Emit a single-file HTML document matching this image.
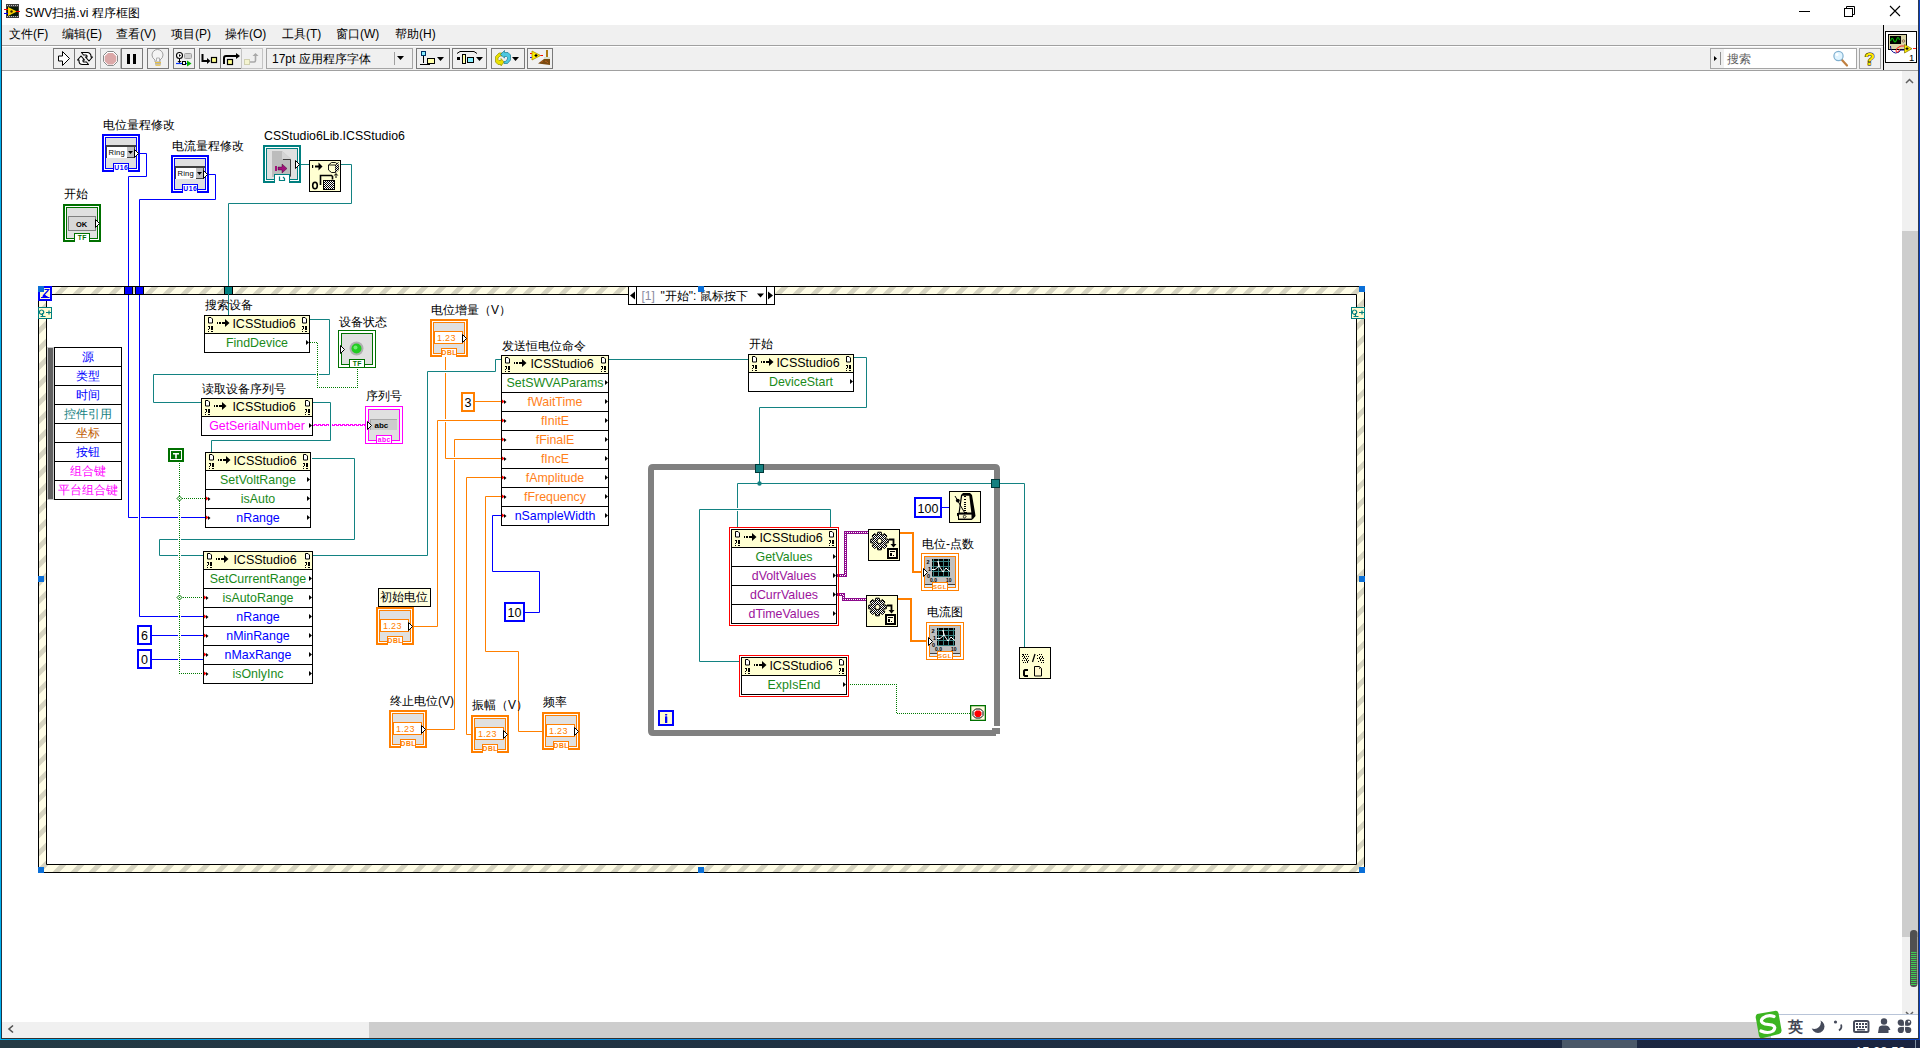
<!DOCTYPE html>
<html><head><meta charset="utf-8"><style>
html,body{margin:0;padding:0;width:1920px;height:1048px;overflow:hidden;background:#fff}
body{font-family:"Liberation Sans", sans-serif;position:relative}
.a{position:absolute}
svg text{font-family:"Liberation Sans", sans-serif}
</style></head><body>
<svg class="a" style="left:0;top:0" width="1920" height="1048" viewBox="0 0 1920 1048" shape-rendering="auto">
<rect x="0" y="0" width="1920" height="1048" fill="#ffffff" />
<rect x="0" y="0" width="1920" height="25" fill="#ffffff" />
<text x="25" y="17" fill="#000" font-size="12" text-anchor="start" >SWV扫描.vi 程序框图</text>
<rect x="6" y="4" width="13" height="14" fill="#3c3c3c" />
<rect x="7" y="5" width="1" height="1" fill="#c0c0c0" />
<rect x="7" y="16" width="1" height="1" fill="#c0c0c0" />
<rect x="9" y="5" width="1" height="1" fill="#c0c0c0" />
<rect x="9" y="16" width="1" height="1" fill="#c0c0c0" />
<rect x="11" y="5" width="1" height="1" fill="#c0c0c0" />
<rect x="11" y="16" width="1" height="1" fill="#c0c0c0" />
<rect x="13" y="5" width="1" height="1" fill="#c0c0c0" />
<rect x="13" y="16" width="1" height="1" fill="#c0c0c0" />
<rect x="15" y="5" width="1" height="1" fill="#c0c0c0" />
<rect x="15" y="16" width="1" height="1" fill="#c0c0c0" />
<rect x="17" y="5" width="1" height="1" fill="#c0c0c0" />
<rect x="17" y="16" width="1" height="1" fill="#c0c0c0" />
<rect x="7" y="7" width="11" height="9" fill="#0a1a0a" />
<path d="M8,7 l9,4.5 l-9,4.5 z" fill="#f8d000"/><circle cx="11.5" cy="11.5" r="1.2" fill="#302000"/>
<rect x="4" y="9" width="4" height="1" fill="#ff0000" />
<rect x="4" y="13" width="4" height="1" fill="#0000ff" />
<rect x="16" y="11" width="4" height="1" fill="#ff0000" />
<line x1="1799" y1="11.5" x2="1810" y2="11.5" stroke="#000"/>
<rect x="1844.5" y="8.5" width="8" height="8" fill="#fff" stroke="#000"/><path d="M1846.5,8.5 v-2 h8 v8 h-2" fill="none" stroke="#000"/>
<path d="M1890,6 L1900,16 M1900,6 L1890,16" stroke="#000" stroke-width="1.1"/>
<rect x="0" y="25" width="1920" height="20" fill="#f0f0f0" />
<text x="9" y="37.5" fill="#000" font-size="12" text-anchor="start" >文件(F)</text>
<text x="62" y="37.5" fill="#000" font-size="12" text-anchor="start" >编辑(E)</text>
<text x="116" y="37.5" fill="#000" font-size="12" text-anchor="start" >查看(V)</text>
<text x="171" y="37.5" fill="#000" font-size="12" text-anchor="start" >项目(P)</text>
<text x="225" y="37.5" fill="#000" font-size="12" text-anchor="start" >操作(O)</text>
<text x="282" y="37.5" fill="#000" font-size="12" text-anchor="start" >工具(T)</text>
<text x="336" y="37.5" fill="#000" font-size="12" text-anchor="start" >窗口(W)</text>
<text x="395" y="37.5" fill="#000" font-size="12" text-anchor="start" >帮助(H)</text>
<rect x="2" y="45" width="1881" height="1" fill="#a0a0a0" />
<rect x="2" y="46" width="1881" height="1" fill="#ffffff" />
<rect x="0" y="47" width="1920" height="23" fill="#f0f0f0" />
<rect x="0" y="70" width="1920" height="1" fill="#a0a0a0" />
<rect x="53.5" y="48.5" width="21" height="20" fill="#f0f0f0" stroke="#7a7a7a"/>
<rect x="74.5" y="48.5" width="21" height="20" fill="#f0f0f0" stroke="#7a7a7a"/>
<rect x="100.5" y="48.5" width="21" height="20" fill="#f0f0f0" stroke="#7a7a7a"/>
<rect x="121.5" y="48.5" width="21" height="20" fill="#f0f0f0" stroke="#7a7a7a"/>
<rect x="147.5" y="48.5" width="21" height="20" fill="#f0f0f0" stroke="#7a7a7a"/>
<rect x="173.5" y="48.5" width="21" height="20" fill="#f0f0f0" stroke="#7a7a7a"/>
<rect x="199.5" y="48.5" width="21" height="20" fill="#f0f0f0" stroke="#7a7a7a"/>
<rect x="220.5" y="48.5" width="21" height="20" fill="#f0f0f0" stroke="#7a7a7a"/>
<rect x="241.5" y="48.5" width="21" height="20" fill="#f0f0f0" stroke="#7a7a7a"/>
<path d="M58.5,56 h4 v-4.5 l7,7 l-7,7 v-4.5 h-4 z" fill="#fff" stroke="#000" stroke-width="1"/>
<path d="M81.5,52.5 h6 a3.5,3.5 0 0,1 3.5,3.5 v1 h1.5 l-3.5,4 l-3.5,-4 h1.5 v-1 a1,1 0 0,0 -1,-1 h-2.5 z" fill="#fff" stroke="#000" stroke-width="1.1" stroke-linejoin="round"/>
<path d="M88.5,64.5 h-6 a3.5,3.5 0 0,1 -3.5,-3.5 v-1 h-1.5 l3.5,-4 l3.5,4 h-1.5 v1 a1,1 0 0,0 1,1 h2.5 z" fill="#fff" stroke="#000" stroke-width="1.1" stroke-linejoin="round"/>
<rect x="100.5" y="48.5" width="20" height="20" fill="#f0f0f0" stroke="#b8b8b8"/>
<path d="M107.5,51.5 h6 l4,4 v6 l-4,4 h-6 l-4,-4 v-6z" fill="#fff" stroke="#8a8a8a" stroke-width="1"/>
<path d="M108,53 h5 l3.3,3.3 v5 l-3.3,3.3 h-5 l-3.3,-3.3 v-5z" fill="#dba8a8"/>
<rect x="127" y="54" width="3" height="10" fill="#000" />
<rect x="133" y="54" width="3" height="10" fill="#000" />
<path d="M155,62 v-2 q-3,-2 -3,-5 a5.5,5.5 0 0,1 11,0 q0,3 -3,5 v2z" fill="#f4f4f4" stroke="#a0a0a0" stroke-width="1"/>
<path d="M156.5,61 v-3 h3 v3" fill="none" stroke="#b0b0b0"/>
<rect x="155" y="62" width="6" height="1.2" fill="#e8c040" />
<rect x="155" y="63.3" width="6" height="1.2" fill="#a0a0a0" />
<rect x="155.5" y="64.6" width="5" height="1.2" fill="#e8c040" />
<circle cx="179.5" cy="55.5" r="3" fill="#fff" stroke="#000" stroke-width="1.1"/><path d="M179,54 l2,1.5 l-2,1.5z" fill="#000"/>
<path d="M179.5,58.5 v4" stroke="#000"/><path d="M177.5,61 h4 l-2,2z" fill="#000"/>
<rect x="184.5" y="53.5" width="7" height="5" rx="1" fill="#d0d0d0" stroke="#a0a0a0"/>
<line x1="176" y1="63.5" x2="187" y2="63.5" stroke="#0030ff" stroke-width="1.2"/><rect x="182.5" y="61.5" width="3" height="3" fill="#fff" stroke="#000"/><path d="M187,60.5 l4.5,3 l-4.5,3z" fill="#00b000"/>
<path d="M202.5,54 v7 h5" fill="none" stroke="#000" stroke-width="2"/><path d="M207,58 l3.5,3 l-3.5,3z" fill="#000"/><rect x="211.5" y="57.5" width="5" height="5" fill="#ffff90" stroke="#000" stroke-width="1.2"/>
<path d="M224,64 v-6 q0,-2 2,-2 h10" fill="none" stroke="#000" stroke-width="2"/><path d="M236,53 l4,3 l-4,3z" fill="#000"/><rect x="227.5" y="59.5" width="5" height="5" fill="#ffff90" stroke="#000" stroke-width="1.2"/>
<rect x="241.5" y="48.5" width="21" height="20" fill="#f0f0f0" stroke="#c4c4c4"/>
<rect x="244.5" y="59.5" width="5" height="5" fill="#f4f4d0" stroke="#d0d0b0"/><path d="M250,62 h4 q1.5,0 1.5,-1.5 v-5" fill="none" stroke="#a8a8a8" stroke-width="1.6"/><path d="M252.5,56 l3,-3 l3,3z" fill="#a8a8a8"/>
<rect x="266.5" y="48.5" width="146" height="20" fill="#f0f0f0" stroke="#a5a5a5"/>
<text x="272" y="63" fill="#000" font-size="12" text-anchor="start" >17pt 应用程序字体</text>
<line x1="394.5" y1="52" x2="394.5" y2="65" stroke="#a0a0a0"/><path d="M397,56 h7 l-3.5,4z" fill="#000"/>
<rect x="416.5" y="48.5" width="33" height="20" fill="#f0f0f0" stroke="#7a7a7a"/>
<rect x="452.5" y="48.5" width="34" height="20" fill="#f0f0f0" stroke="#7a7a7a"/>
<rect x="491.5" y="48.5" width="33" height="20" fill="#f0f0f0" stroke="#7a7a7a"/>
<rect x="527.5" y="48.5" width="25" height="20" fill="#f0f0f0" stroke="#7a7a7a"/>
<rect x="421.5" y="51.5" width="4" height="4" fill="#8ef" stroke="#036"/><path d="M423.5,56 v7 M420,64.5 h10" stroke="#000"/><rect x="427.5" y="58.5" width="7" height="5" fill="#ffa" stroke="#000"/><path d="M437,57 h7 l-3.5,4z" fill="#000"/>
<path d="M457,53.5 l3,-2 h14 l3,2" fill="none" stroke="#000"/><rect x="457" y="57" width="3" height="3" fill="#000"/><rect x="462.5" y="54.5" width="3" height="9" fill="#ffa" stroke="#000"/><rect x="467.5" y="57.5" width="6" height="5" fill="#8ef" stroke="#000"/><path d="M476,57 h7 l-3.5,4z" fill="#000"/>
<path d="M502,53 L499,53 L495.5,56.5 L495.5,62 L498,64.5 L501,64.5 L501,66 L504,62 L501,58.5 L501,60.5 L499,60.5 L498,59.5 L498,58 L500,56 L502,56 Z" fill="#e8e000" stroke="#9a9400" stroke-width="0.7"/>
<path d="M504.5,50.5 L500.5,54.5 L504.5,58 L504.5,56.5 L506.5,56.5 L507.5,57.5 L507.5,59 L505.5,61.5 L504,61.5 L504,63.5 L507.5,63.5 L510.5,60 L510.5,55 L508,52.5 L504.5,52.5 Z" fill="#4ec8e0" stroke="#1a7a90" stroke-width="0.7"/>
<path d="M512,57 h7 l-3.5,4z" fill="#000"/>
<line x1="530" y1="53.5" x2="532" y2="53.5" stroke="#f00"/><line x1="530" y1="57.5" x2="532" y2="57.5" stroke="#00f"/><line x1="540" y1="55.5" x2="543" y2="55.5" stroke="#f00"/>
<path d="M532,51 L540.5,55.5 L532,60 Z" fill="#ffee00" stroke="#b08a00" stroke-width="0.8"/><path d="M534.5,55.5 h3 M536,54 v3" stroke="#000" stroke-width="1.2"/>
<rect x="546" y="50" width="2" height="7" fill="#b07a10"/><rect x="544" y="57" width="6" height="2" fill="#d8e0d0"/>
<path d="M544,59 L550,59 L550,65 L538,63.5 Z" fill="#7a4a10"/><path d="M541,62 l2,-1 M545,61 l2,1 M547,63 l1,-1" stroke="#c06020" stroke-width="0.8"/>
<rect x="1710.5" y="48.5" width="146" height="20" fill="#fff" stroke="#a5a5a5"/><rect x="1711" y="49" width="13" height="19" fill="#f0f0f0"/><path d="M1714,56 l3,2.5 l-3,2.5z" fill="#000"/>
<text x="1727" y="63" fill="#606060" font-size="12" text-anchor="start" >搜索</text>
<line x1="1842" y1="60" x2="1847" y2="65.5" stroke="#c08040" stroke-width="2.2" stroke-linecap="round"/><circle cx="1838.5" cy="56" r="4.6" fill="#e0f4ff" stroke="#80b0d0" stroke-width="1.2"/><circle cx="1837" cy="54.5" r="1.5" fill="#fff"/>
<line x1="1720.5" y1="52" x2="1720.5" y2="65" stroke="#909090"/>
<rect x="1859.5" y="48.5" width="21" height="20" fill="#f0f0f0" stroke="#a5a5a5"/>
<text x="1864.5" y="65" fill="#ffe800" font-size="17" text-anchor="start" font-weight="bold" stroke="#000" stroke-width="0.9" paint-order="stroke">?</text>
<line x1="1883.5" y1="25" x2="1883.5" y2="70" stroke="#000"/>
<rect x="1885.5" y="31.5" width="31" height="31" fill="#fff" stroke="#000"/>
<rect x="1888" y="34" width="19" height="16" fill="#000" />
<rect x="1889" y="35" width="17" height="14" fill="#d8d4a8" />
<rect x="1890" y="36" width="11" height="8" fill="#000" />
<path d="M1890.5,41 q1.5,-5 3,-1 q1.5,4 3,0 q1.5,-5 3,0" fill="none" stroke="#00c000" stroke-width="1.1"/>
<circle cx="1903.5" cy="41" r="1.3" fill="#f0c090" stroke="#333" stroke-width="0.5"/>
<path d="M1890.5,46 q0,6 5,7 q4,0 5,-3 h4" fill="none" stroke="#0a0a90" stroke-width="1"/>
<path d="M1904,46 h-3 l-2,1 q-3,1 -3,4 q0,2 2,1 l2,-3" fill="none" stroke="#ff2020" stroke-width="1"/>
<path d="M1904.5,44.5 L1912,48.7 L1904.5,53 Z" fill="#ffee00" stroke="#807000" stroke-width="0.7"/><path d="M1905.5,48.7 h3 M1907,47.2 v3" stroke="#000" stroke-width="1"/>
<rect x="1913" y="48" width="3" height="1" fill="#ff2020" />
<text x="1909" y="60.5" fill="#000" font-size="9.5" text-anchor="start" >1</text>
<rect x="1902" y="71" width="16" height="951" fill="#f0f0f0" />
<rect x="1902" y="231" width="16" height="706" fill="#cdcdcd" />
<path d="M1906,83 l3.5,-3.5 l3.5,3.5" fill="none" stroke="#606060" stroke-width="1.5"/>
<path d="M1906,1012 l3.5,3.5 l3.5,-3.5" fill="none" stroke="#606060" stroke-width="1.5"/>
<rect x="1910" y="930" width="7.5" height="57" rx="3.5" fill="#505050"/>
<line x1="1911" y1="952.5" x2="1916.5" y2="952.5" stroke="#3ccf50"/>
<line x1="1911" y1="954.5" x2="1916.5" y2="954.5" stroke="#3ccf50"/>
<line x1="1911" y1="956.5" x2="1916.5" y2="956.5" stroke="#3ccf50"/>
<line x1="1911" y1="958.5" x2="1916.5" y2="958.5" stroke="#3ccf50"/>
<line x1="1911" y1="960.5" x2="1916.5" y2="960.5" stroke="#3ccf50"/>
<line x1="1911" y1="962.5" x2="1916.5" y2="962.5" stroke="#3ccf50"/>
<line x1="1911" y1="964.5" x2="1916.5" y2="964.5" stroke="#3ccf50"/>
<line x1="1911" y1="966.5" x2="1916.5" y2="966.5" stroke="#3ccf50"/>
<line x1="1911" y1="968.5" x2="1916.5" y2="968.5" stroke="#3ccf50"/>
<line x1="1911" y1="970.5" x2="1916.5" y2="970.5" stroke="#3ccf50"/>
<line x1="1911" y1="972.5" x2="1916.5" y2="972.5" stroke="#3ccf50"/>
<line x1="1911" y1="974.5" x2="1916.5" y2="974.5" stroke="#3ccf50"/>
<line x1="1911" y1="976.5" x2="1916.5" y2="976.5" stroke="#3ccf50"/>
<line x1="1911" y1="978.5" x2="1916.5" y2="978.5" stroke="#3ccf50"/>
<line x1="1911" y1="980.5" x2="1916.5" y2="980.5" stroke="#3ccf50"/>
<line x1="1911" y1="982.5" x2="1916.5" y2="982.5" stroke="#3ccf50"/>
<line x1="1911" y1="984.5" x2="1916.5" y2="984.5" stroke="#3ccf50"/>
<rect x="2" y="1022" width="1900" height="16" fill="#f0f0f0" />
<rect x="369" y="1022" width="1533" height="16" fill="#cdcdcd" />
<path d="M13,1025.5 l-4,3.5 l4,3.5" fill="none" stroke="#505050" stroke-width="1.6"/>
<rect x="1770.5" y="1014.5" width="148" height="24" fill="#fff" stroke="#b8c4d8"/>
<path d="M1757,1014 Q1755,1016 1756,1019 L1759,1036 Q1760,1039 1763,1038 L1779,1034 Q1782,1033 1781.5,1030 L1778.5,1013 Q1777.5,1010 1774.5,1011 Z" fill="#3cb521"/>
<path d="M1774,1016.5 Q1768,1014 1763,1018 Q1759,1022 1765,1024 L1772,1025 Q1777,1027 1773,1031 Q1768,1034 1761,1031" fill="none" stroke="#fff" stroke-width="3.2" stroke-linecap="round"/>
<text x="1787.5" y="1031.5" fill="#404552" font-size="14.5" text-anchor="start" font-weight="bold">英</text>
<circle cx="1818" cy="1026.5" r="6.5" fill="#454a5a"/><circle cx="1814.3" cy="1022.3" r="6.6" fill="#fff"/>
<circle cx="1835.5" cy="1022" r="1.6" fill="#454a5a"/><path d="M1841,1024.5 q1.5,3.5 -2,6" fill="none" stroke="#454a5a" stroke-width="1.8"/>
<rect x="1854" y="1021" width="14.5" height="11" rx="1.5" fill="#fff" stroke="#454a5a" stroke-width="2"/>
<rect x="1856" y="1023" width="2" height="2" fill="#454a5a"/>
<rect x="1859" y="1023" width="2" height="2" fill="#454a5a"/>
<rect x="1862" y="1023" width="2" height="2" fill="#454a5a"/>
<rect x="1865" y="1023" width="2" height="2" fill="#454a5a"/>
<rect x="1856" y="1026" width="2" height="2" fill="#454a5a"/>
<rect x="1859" y="1026" width="2" height="2" fill="#454a5a"/>
<rect x="1862" y="1026" width="2" height="2" fill="#454a5a"/>
<rect x="1865" y="1026" width="2" height="2" fill="#454a5a"/>
<rect x="1857" y="1029" width="8" height="1.5" fill="#454a5a"/>
<circle cx="1884" cy="1021.5" r="3.2" fill="#454a5a"/><path d="M1878,1033 L1879,1027 Q1880,1025.5 1882,1025.5 H1886 Q1888,1025.5 1889,1027 L1890.5,1030 L1888.5,1030 L1888.5,1033Z" fill="#454a5a"/>
<circle cx="1900.8" cy="1022.6" r="3.1" fill="#454a5a"/><rect x="1900.8" y="1022.6" width="3.1" height="3.1" fill="#454a5a"/><circle cx="1900.8" cy="1030.0" r="3.1" fill="#454a5a"/><rect x="1900.8" y="1026.9" width="3.1" height="3.1" fill="#454a5a"/><circle cx="1908.2" cy="1022.6" r="3.1" fill="#454a5a"/><rect x="1905.1" y="1022.6" width="3.1" height="3.1" fill="#454a5a"/><circle cx="1908.2" cy="1030.0" r="3.1" fill="#454a5a"/><rect x="1905.1" y="1026.9" width="3.1" height="3.1" fill="#454a5a"/><circle cx="1909.0" cy="1021.8" r="1" fill="#fff"/>
<defs><linearGradient id="bord" x1="0" x2="1" y1="0" y2="0"><stop offset="0" stop-color="#00b0f0"/><stop offset="0.6" stop-color="#0a70d8"/><stop offset="1" stop-color="#0a40c0"/></linearGradient><linearGradient id="task" x1="0" x2="1" y1="0" y2="0"><stop offset="0" stop-color="#243a44"/><stop offset="1" stop-color="#1a2440"/></linearGradient></defs>
<rect x="0" y="0" width="1" height="1040" fill="#00b0f0" />
<rect x="1" y="0" width="1" height="1039" fill="#203444" />
<rect x="1918" y="0" width="1" height="1039" fill="#303a50" />
<rect x="1919" y="0" width="1" height="1040" fill="#0a40c0" />
<rect x="1" y="1038" width="1918" height="1" fill="#303030" />
<rect x="0" y="1039" width="1920" height="1" fill="url(#bord)" />
<rect x="0" y="1040" width="1920" height="8" fill="url(#task)" />
<rect x="1562" y="1040" width="75" height="8" fill="#4a5868" />
<rect x="1915" y="1040" width="1" height="8" fill="#8090a0" />
<text x="1855" y="1056" fill="#fff" font-size="13" text-anchor="start" >15:28:59</text>
<defs>
<pattern id="stripes" patternUnits="userSpaceOnUse" width="18" height="18" patternTransform="skewX(-45)">
<rect x="-1" y="-1" width="20" height="20" fill="#fffde6" shape-rendering="crispEdges"/><rect x="6.5" y="-1" width="6.9" height="20" fill="#d6d4c0" shape-rendering="crispEdges"/>
</pattern>
<pattern id="checker" patternUnits="userSpaceOnUse" width="2" height="2"><rect width="2" height="2" fill="#fff"/><rect width="1" height="1" fill="#000"/><rect x="1" y="1" width="1" height="1" fill="#000"/></pattern>
<pattern id="wavy" patternUnits="userSpaceOnUse" width="4" height="4"><path d="M0,2 l1,-1 l2,2 l1,-1" fill="none" stroke="#ff00ff" stroke-width="1"/></pattern>
</defs>
<text x="103" y="128.5" fill="#000" font-size="12" text-anchor="start" >电位量程修改</text>
<text x="172" y="149.5" fill="#000" font-size="12" text-anchor="start" >电流量程修改</text>
<text x="264" y="140" fill="#000" font-size="12.3" text-anchor="start" >CSStudio6Lib.ICSStudio6</text>
<text x="64" y="198" fill="#000" font-size="12" text-anchor="start" >开始</text>
<rect x="102" y="134" width="38" height="38" fill="#0000ff" />
<rect x="104" y="136" width="34" height="34" fill="#fff" />
<rect x="105" y="137" width="32" height="32" fill="#0000ff" />
<rect x="106" y="138" width="30" height="30" fill="#e0e0e0" />
<rect x="113" y="163" width="16" height="9" fill="#0000ff" />
<rect x="114" y="164" width="14" height="8" fill="#fff" />
<text x="121.3" y="170.3" fill="#0000ff" font-size="6.8" text-anchor="middle" font-weight="bold" letter-spacing="0.5">U16</text>
<rect x="106" y="145" width="30" height="2" fill="#404040" />
<rect x="106" y="147" width="1" height="11" fill="#404040" />
<rect x="107" y="147" width="20" height="11" fill="#fff" />
<rect x="127" y="147" width="7" height="10" fill="#c0c0c0" />
<rect x="127" y="157" width="8" height="1" fill="#404040" />
<rect x="134" y="146" width="1" height="12" fill="#404040" />
<text x="108.5" y="155" fill="#000" font-size="7.6" text-anchor="start" letter-spacing="0.2">Ring</text>
<path d="M128,151 h5 l-2.5,3 z" fill="#000"/>
<path d="M134.5,149.5 l4,4 l-4,4 z" fill="#fff" stroke="#000" stroke-width="1"/>
<rect x="171" y="155" width="38" height="38" fill="#0000ff" />
<rect x="173" y="157" width="34" height="34" fill="#fff" />
<rect x="174" y="158" width="32" height="32" fill="#0000ff" />
<rect x="175" y="159" width="30" height="30" fill="#e0e0e0" />
<rect x="182" y="184" width="16" height="9" fill="#0000ff" />
<rect x="183" y="185" width="14" height="8" fill="#fff" />
<text x="190.3" y="191.3" fill="#0000ff" font-size="6.8" text-anchor="middle" font-weight="bold" letter-spacing="0.5">U16</text>
<rect x="175" y="166" width="30" height="2" fill="#404040" />
<rect x="175" y="168" width="1" height="11" fill="#404040" />
<rect x="176" y="168" width="20" height="11" fill="#fff" />
<rect x="196" y="168" width="7" height="10" fill="#c0c0c0" />
<rect x="196" y="178" width="8" height="1" fill="#404040" />
<rect x="203" y="167" width="1" height="12" fill="#404040" />
<text x="177.5" y="176" fill="#000" font-size="7.6" text-anchor="start" letter-spacing="0.2">Ring</text>
<path d="M197,172 h5 l-2.5,3 z" fill="#000"/>
<path d="M203.5,170.5 l4,4 l-4,4 z" fill="#fff" stroke="#000" stroke-width="1"/>
<rect x="63" y="204" width="38" height="38" fill="#007000" />
<rect x="65" y="206" width="34" height="34" fill="#fff" />
<rect x="66" y="207" width="32" height="32" fill="#007000" />
<rect x="67" y="208" width="30" height="30" fill="#e0e0e0" />
<rect x="74" y="233" width="16" height="9" fill="#007000" />
<rect x="75" y="234" width="14" height="8" fill="#fff" />
<text x="82.3" y="240.3" fill="#007000" font-size="6.8" text-anchor="middle" font-weight="bold" letter-spacing="0.5">TF</text>
<rect x="68" y="216" width="28" height="15" fill="#808080" />
<rect x="69" y="217" width="26" height="13" fill="#d8d8d8" />
<text x="81.5" y="227" fill="#000" font-size="7.5" text-anchor="middle" font-weight="bold">OK</text>
<path d="M95.5,219.5 l4,4 l-4,4 z" fill="#fff" stroke="#000" stroke-width="1"/>
<rect x="263" y="145" width="38" height="38" fill="#007f7f" />
<rect x="265" y="147" width="34" height="34" fill="#fff" />
<rect x="266" y="148" width="32" height="32" fill="#007f7f" />
<rect x="267" y="149" width="30" height="30" fill="#e0e0e0" />
<path d="M272,151 h10 l9,8 v18 h-19z" fill="#bcbcbc"/>
<path d="M282,151 v8 h9z" fill="#d4d4d4"/>
<path d="M283,159.5 h7.5 v17" fill="none" stroke="#404040" stroke-width="1"/>
<rect x="275" y="166" width="2" height="5" fill="#a0107a"/><path d="M278,167 h4 v-3 l5,4.5 l-5,4.5 v-3 h-4z" fill="#a0107a" stroke="#300020" stroke-width="0.4"/>
<rect x="274" y="174" width="16" height="9" fill="#007f7f" />
<rect x="275" y="175" width="14" height="8" fill="#fff" />
<path d="M279.5,176.5 v4 h5 v-2 l-1.5,-1.5" fill="none" stroke="#007f7f" stroke-width="1.2"/>
<path d="M295.5,160.5 l4,4 l-4,4 z" fill="#fff" stroke="#000" stroke-width="1"/>
<rect x="309.5" y="160.5" width="31" height="31" fill="#ffffd2" stroke="#000"/>
<rect x="312" y="165" width="1.2" height="3" fill="#000"/><path d="M315,165.5 h3.5 v-3 l4,4 l-4,4 v-3 h-3.5z" fill="#000"/>
<path d="M328.5,165 l3,-2.5 h4 l3,2.5 v5 l-3,2.5 h-4 l-3,-2.5z M328.5,165 h7 l3,-2.5 M335.5,165 v7.5" fill="none" stroke="#000" stroke-width="0.9"/>
<path d="M335.5,165.5 l3,-2.5 v7 l-3,2.5z" fill="url(#checker)"/>
<path d="M336,178 v-4 M334.3,175.5 l1.7,-2 l1.7,2" fill="none" stroke="#000" stroke-width="1"/>
<path d="M320.5,185 v-9.5 h11 l1,1 v3" fill="none" stroke="#000" stroke-width="1.6"/>
<rect x="323" y="180" width="12" height="10" fill="#000" />
<rect x="324" y="181" width="10" height="8" fill="url(#checker)"/>
<ellipse cx="315" cy="185.5" rx="2.3" ry="3.3" fill="none" stroke="#000" stroke-width="1.6"/>
<polyline points="140,153.5 146.5,153.5 146.5,176.5 128.5,176.5 128.5,517.5 205,517.5" fill="none" stroke="#0000ff" stroke-width="1" />
<polyline points="209,174.5 215.5,174.5 215.5,199.5 139.5,199.5 139.5,616.5 203,616.5" fill="none" stroke="#0000ff" stroke-width="1" />
<polyline points="301,164.5 309,164.5" fill="none" stroke="#138282" stroke-width="1" />
<polyline points="341,164.5 351.5,164.5 351.5,203.5 228.5,203.5 228.5,320" fill="none" stroke="#138282" stroke-width="1" />
<clipPath id="bandclip"><path d="M38,286 H1365 V873 H38 Z M46,294 V864 H1356 V294 Z" clip-rule="evenodd"/></clipPath>
<path d="M38,286 H1365 V873 H38 Z M46,294 V864 H1356 V294 Z" fill="#fffde6" fill-rule="evenodd"/>
<g clip-path="url(#bandclip)"><path d="M-9.5,286 L-2.6000000000000227,286 L-589.6,873 L-596.5,873Z M8.5,286 L15.399999999999977,286 L-571.6,873 L-578.5,873Z M26.5,286 L33.39999999999998,286 L-553.6,873 L-560.5,873Z M44.5,286 L51.39999999999998,286 L-535.6,873 L-542.5,873Z M62.5,286 L69.39999999999998,286 L-517.6,873 L-524.5,873Z M80.5,286 L87.39999999999998,286 L-499.6,873 L-506.5,873Z M98.5,286 L105.39999999999998,286 L-481.6,873 L-488.5,873Z M116.5,286 L123.39999999999998,286 L-463.6,873 L-470.5,873Z M134.5,286 L141.39999999999998,286 L-445.6,873 L-452.5,873Z M152.5,286 L159.39999999999998,286 L-427.6,873 L-434.5,873Z M170.5,286 L177.39999999999998,286 L-409.6,873 L-416.5,873Z M188.5,286 L195.39999999999998,286 L-391.6,873 L-398.5,873Z M206.5,286 L213.39999999999998,286 L-373.6,873 L-380.5,873Z M224.5,286 L231.39999999999998,286 L-355.6,873 L-362.5,873Z M242.5,286 L249.39999999999998,286 L-337.6,873 L-344.5,873Z M260.5,286 L267.4,286 L-319.6,873 L-326.5,873Z M278.5,286 L285.4,286 L-301.6,873 L-308.5,873Z M296.5,286 L303.4,286 L-283.6,873 L-290.5,873Z M314.5,286 L321.4,286 L-265.6,873 L-272.5,873Z M332.5,286 L339.4,286 L-247.60000000000002,873 L-254.5,873Z M350.5,286 L357.4,286 L-229.60000000000002,873 L-236.5,873Z M368.5,286 L375.4,286 L-211.60000000000002,873 L-218.5,873Z M386.5,286 L393.4,286 L-193.60000000000002,873 L-200.5,873Z M404.5,286 L411.4,286 L-175.60000000000002,873 L-182.5,873Z M422.5,286 L429.4,286 L-157.60000000000002,873 L-164.5,873Z M440.5,286 L447.4,286 L-139.60000000000002,873 L-146.5,873Z M458.5,286 L465.4,286 L-121.60000000000002,873 L-128.5,873Z M476.5,286 L483.4,286 L-103.60000000000002,873 L-110.5,873Z M494.5,286 L501.4,286 L-85.60000000000002,873 L-92.5,873Z M512.5,286 L519.4,286 L-67.60000000000002,873 L-74.5,873Z M530.5,286 L537.4,286 L-49.60000000000002,873 L-56.5,873Z M548.5,286 L555.4,286 L-31.600000000000023,873 L-38.5,873Z M566.5,286 L573.4,286 L-13.600000000000023,873 L-20.5,873Z M584.5,286 L591.4,286 L4.399999999999977,873 L-2.5,873Z M602.5,286 L609.4,286 L22.399999999999977,873 L15.5,873Z M620.5,286 L627.4,286 L40.39999999999998,873 L33.5,873Z M638.5,286 L645.4,286 L58.39999999999998,873 L51.5,873Z M656.5,286 L663.4,286 L76.39999999999998,873 L69.5,873Z M674.5,286 L681.4,286 L94.39999999999998,873 L87.5,873Z M692.5,286 L699.4,286 L112.39999999999998,873 L105.5,873Z M710.5,286 L717.4,286 L130.39999999999998,873 L123.5,873Z M728.5,286 L735.4,286 L148.39999999999998,873 L141.5,873Z M746.5,286 L753.4000000000001,286 L166.4000000000001,873 L159.5,873Z M764.5,286 L771.4000000000001,286 L184.4000000000001,873 L177.5,873Z M782.5,286 L789.4000000000001,286 L202.4000000000001,873 L195.5,873Z M800.5,286 L807.4000000000001,286 L220.4000000000001,873 L213.5,873Z M818.5,286 L825.4000000000001,286 L238.4000000000001,873 L231.5,873Z M836.5,286 L843.4000000000001,286 L256.4000000000001,873 L249.5,873Z M854.5,286 L861.4000000000001,286 L274.4000000000001,873 L267.5,873Z M872.5,286 L879.4000000000001,286 L292.4000000000001,873 L285.5,873Z M890.5,286 L897.4000000000001,286 L310.4000000000001,873 L303.5,873Z M908.5,286 L915.4000000000001,286 L328.4000000000001,873 L321.5,873Z M926.5,286 L933.4000000000001,286 L346.4000000000001,873 L339.5,873Z M944.5,286 L951.4000000000001,286 L364.4000000000001,873 L357.5,873Z M962.5,286 L969.4000000000001,286 L382.4000000000001,873 L375.5,873Z M980.5,286 L987.4000000000001,286 L400.4000000000001,873 L393.5,873Z M998.5,286 L1005.4000000000001,286 L418.4000000000001,873 L411.5,873Z M1016.5,286 L1023.4000000000001,286 L436.4000000000001,873 L429.5,873Z M1034.5,286 L1041.4,286 L454.4000000000001,873 L447.5,873Z M1052.5,286 L1059.4,286 L472.4000000000001,873 L465.5,873Z M1070.5,286 L1077.4,286 L490.4000000000001,873 L483.5,873Z M1088.5,286 L1095.4,286 L508.4000000000001,873 L501.5,873Z M1106.5,286 L1113.4,286 L526.4000000000001,873 L519.5,873Z M1124.5,286 L1131.4,286 L544.4000000000001,873 L537.5,873Z M1142.5,286 L1149.4,286 L562.4000000000001,873 L555.5,873Z M1160.5,286 L1167.4,286 L580.4000000000001,873 L573.5,873Z M1178.5,286 L1185.4,286 L598.4000000000001,873 L591.5,873Z M1196.5,286 L1203.4,286 L616.4000000000001,873 L609.5,873Z M1214.5,286 L1221.4,286 L634.4000000000001,873 L627.5,873Z M1232.5,286 L1239.4,286 L652.4000000000001,873 L645.5,873Z M1250.5,286 L1257.4,286 L670.4000000000001,873 L663.5,873Z M1268.5,286 L1275.4,286 L688.4000000000001,873 L681.5,873Z M1286.5,286 L1293.4,286 L706.4000000000001,873 L699.5,873Z M1304.5,286 L1311.4,286 L724.4000000000001,873 L717.5,873Z M1322.5,286 L1329.4,286 L742.4000000000001,873 L735.5,873Z M1340.5,286 L1347.4,286 L760.4000000000001,873 L753.5,873Z M1358.5,286 L1365.4,286 L778.4000000000001,873 L771.5,873Z M1376.5,286 L1383.4,286 L796.4000000000001,873 L789.5,873Z M1394.5,286 L1401.4,286 L814.4000000000001,873 L807.5,873Z M1412.5,286 L1419.4,286 L832.4000000000001,873 L825.5,873Z M1430.5,286 L1437.4,286 L850.4000000000001,873 L843.5,873Z M1448.5,286 L1455.4,286 L868.4000000000001,873 L861.5,873Z M1466.5,286 L1473.4,286 L886.4000000000001,873 L879.5,873Z M1484.5,286 L1491.4,286 L904.4000000000001,873 L897.5,873Z M1502.5,286 L1509.4,286 L922.4000000000001,873 L915.5,873Z M1520.5,286 L1527.4,286 L940.4000000000001,873 L933.5,873Z M1538.5,286 L1545.4,286 L958.4000000000001,873 L951.5,873Z M1556.5,286 L1563.4,286 L976.4000000000001,873 L969.5,873Z M1574.5,286 L1581.4,286 L994.4000000000001,873 L987.5,873Z M1592.5,286 L1599.4,286 L1012.4000000000001,873 L1005.5,873Z M1610.5,286 L1617.4,286 L1030.4,873 L1023.5,873Z M1628.5,286 L1635.4,286 L1048.4,873 L1041.5,873Z M1646.5,286 L1653.4,286 L1066.4,873 L1059.5,873Z M1664.5,286 L1671.4,286 L1084.4,873 L1077.5,873Z M1682.5,286 L1689.4,286 L1102.4,873 L1095.5,873Z M1700.5,286 L1707.4,286 L1120.4,873 L1113.5,873Z M1718.5,286 L1725.4,286 L1138.4,873 L1131.5,873Z M1736.5,286 L1743.4,286 L1156.4,873 L1149.5,873Z M1754.5,286 L1761.4,286 L1174.4,873 L1167.5,873Z M1772.5,286 L1779.4,286 L1192.4,873 L1185.5,873Z M1790.5,286 L1797.4,286 L1210.4,873 L1203.5,873Z M1808.5,286 L1815.4,286 L1228.4,873 L1221.5,873Z M1826.5,286 L1833.4,286 L1246.4,873 L1239.5,873Z M1844.5,286 L1851.4,286 L1264.4,873 L1257.5,873Z M1862.5,286 L1869.4,286 L1282.4,873 L1275.5,873Z M1880.5,286 L1887.4,286 L1300.4,873 L1293.5,873Z M1898.5,286 L1905.4,286 L1318.4,873 L1311.5,873Z M1916.5,286 L1923.4,286 L1336.4,873 L1329.5,873Z M1934.5,286 L1941.4,286 L1354.4,873 L1347.5,873Z M1952.5,286 L1959.4,286 L1372.4,873 L1365.5,873Z M1970.5,286 L1977.4,286 L1390.4,873 L1383.5,873Z M1988.5,286 L1995.4,286 L1408.4,873 L1401.5,873Z M2006.5,286 L2013.4,286 L1426.4,873 L1419.5,873Z M2024.5,286 L2031.4,286 L1444.4,873 L1437.5,873Z M2042.5,286 L2049.4,286 L1462.4,873 L1455.5,873Z M2060.5,286 L2067.4,286 L1480.4,873 L1473.5,873Z M2078.5,286 L2085.4,286 L1498.4,873 L1491.5,873Z M2096.5,286 L2103.4,286 L1516.4,873 L1509.5,873Z M2114.5,286 L2121.4,286 L1534.4,873 L1527.5,873Z M2132.5,286 L2139.4,286 L1552.4,873 L1545.5,873Z" fill="#d6d4c0"/></g>
<path d="M38.5,286.5 H1364.5 V872.5 H38.5 Z" fill="none" stroke="#000"/>
<path d="M46.5,294.5 H1356.5 V864.5 H46.5 Z" fill="none" stroke="#000"/>
<rect x="38" y="286" width="6" height="6" fill="#0a6fd8" />
<rect x="1359" y="286" width="6" height="6" fill="#0a6fd8" />
<rect x="38" y="867" width="6" height="6" fill="#0a6fd8" />
<rect x="1359" y="867" width="6" height="6" fill="#0a6fd8" />
<rect x="698" y="867" width="6" height="6" fill="#0a6fd8" />
<rect x="38" y="576" width="6" height="6" fill="#0a6fd8" />
<rect x="1359" y="576" width="6" height="6" fill="#0a6fd8" />
<rect x="124" y="286" width="9" height="9" fill="#000" />
<rect x="125" y="287" width="7" height="7" fill="#0000ff" />
<rect x="135" y="286" width="9" height="9" fill="#000" />
<rect x="136" y="287" width="7" height="7" fill="#0000ff" />
<rect x="224" y="286" width="9" height="9" fill="#000" />
<rect x="225" y="287" width="7" height="7" fill="#007f7f" />
<rect x="628.5" y="286.5" width="146" height="18" fill="#fff" stroke="#000"/>
<line x1="636.5" y1="286" x2="636.5" y2="305" stroke="#000"/><line x1="766.5" y1="286" x2="766.5" y2="305" stroke="#000"/>
<path d="M630,295.5 l5,-4 v8z" fill="#000"/><path d="M773,295.5 l-5,-4 v8z" fill="#000"/>
<text x="641.5" y="299.5" fill="#8a8aa0" font-size="12" text-anchor="start" >[1]</text>
<text x="660.5" y="299.5" fill="#000" font-size="12" text-anchor="start" >"开始": 鼠标按下</text>
<path d="M757,293.5 h7 l-3.5,4z" fill="#000"/>
<rect x="698" y="286" width="6" height="6" fill="#0a6fd8" />
<rect x="38" y="286" width="14" height="15" fill="#0000ff" />
<rect x="40" y="288" width="10" height="11" fill="#fffbd0" />
<path d="M44.5,289.5 h5 M48.5,290 L43,296 M44,294.5 L46,296.5 M41,297.5 h8.5 M42.5,296.5 h5" stroke="#0000ff" stroke-width="1.2" fill="none"/>
<rect x="38" y="286" width="6" height="6" fill="#0a6fd8" />
<rect x="38" y="307" width="14" height="12" fill="#007f7f" />
<rect x="39" y="308" width="12" height="10" fill="#fffbd0" />
<path d="M41.5,310 a2.2,2.2 0 1,0 0.1,0 M42.5,313 v3 M40.5,316.5 h5" fill="none" stroke="#007f7f" stroke-width="1.2"/>
<path d="M46,312.5 h5 M49,310.5 v4" stroke="#007f7f" stroke-width="1.2"/>
<rect x="1351" y="307" width="14" height="12" fill="#007f7f" />
<rect x="1352" y="308" width="12" height="10" fill="#fffbd0" />
<path d="M1354.5,310 a2.2,2.2 0 1,0 0.1,0 M1355.5,313 v3 M1353.5,316.5 h5" fill="none" stroke="#007f7f" stroke-width="1.2"/>
<path d="M1359,312.5 h5 M1362,310.5 v4" stroke="#007f7f" stroke-width="1.2"/>
<rect x="47" y="347" width="7" height="153" fill="#c8c8c8" />
<rect x="48" y="348" width="5" height="151" fill="#606060"/>
<rect x="54.5" y="347.5" width="67" height="19" fill="#fff" stroke="#000"/>
<text x="88" y="361" fill="#0000ff" font-size="12" text-anchor="middle" >源</text>
<rect x="54.5" y="366.5" width="67" height="19" fill="#fff" stroke="#000"/>
<text x="88" y="380" fill="#0000ff" font-size="12" text-anchor="middle" >类型</text>
<rect x="54.5" y="385.5" width="67" height="19" fill="#fff" stroke="#000"/>
<text x="88" y="399" fill="#0000ff" font-size="12" text-anchor="middle" >时间</text>
<rect x="54.5" y="404.5" width="67" height="19" fill="#fff" stroke="#000"/>
<text x="88" y="418" fill="#148080" font-size="12" text-anchor="middle" >控件引用</text>
<rect x="54.5" y="423.5" width="67" height="19" fill="#fff" stroke="#000"/>
<text x="88" y="437" fill="#c05a00" font-size="12" text-anchor="middle" >坐标</text>
<rect x="54.5" y="442.5" width="67" height="19" fill="#fff" stroke="#000"/>
<text x="88" y="456" fill="#0000ff" font-size="12" text-anchor="middle" >按钮</text>
<rect x="54.5" y="461.5" width="67" height="19" fill="#fff" stroke="#000"/>
<text x="88" y="475" fill="#ff00ff" font-size="12" text-anchor="middle" >组合键</text>
<rect x="54.5" y="480.5" width="67" height="19" fill="#fff" stroke="#000"/>
<text x="88" y="494" fill="#ff00ff" font-size="12" text-anchor="middle" >平台组合键</text>
<polyline points="228.5,294 228.5,315" fill="none" stroke="#138282" stroke-width="1" />
<polyline points="310,319.5 329.5,319.5 329.5,374.5 153.5,374.5 153.5,402.5 201,402.5" fill="none" stroke="#138282" stroke-width="1" />
<polyline points="313,402.5 330.5,402.5 330.5,440.5 211.5,440.5 211.5,452" fill="none" stroke="#138282" stroke-width="1" />
<polyline points="312,458.5 354.5,458.5 354.5,539.5 159.5,539.5 159.5,555.5 203,555.5" fill="none" stroke="#138282" stroke-width="1" />
<polyline points="313,555.5 427.5,555.5 427.5,371.5 495.5,371.5 495.5,359.5 502,359.5" fill="none" stroke="#138282" stroke-width="1" />
<polyline points="609,359.5 748,359.5" fill="none" stroke="#138282" stroke-width="1" />
<polyline points="854,357.5 866.5,357.5 866.5,407.5 759.5,407.5 759.5,465" fill="none" stroke="#138282" stroke-width="1" />
<polyline points="128.5,517.5 205,517.5" fill="none" stroke="#0000ff" stroke-width="1" />
<polyline points="139.5,616.5 203,616.5" fill="none" stroke="#0000ff" stroke-width="1" />
<polyline points="151,635.5 203,635.5" fill="none" stroke="#0000ff" stroke-width="1" />
<polyline points="151,659.5 203,659.5" fill="none" stroke="#0000ff" stroke-width="1" />
<path d="M179,463h1v1h-1zM179,465h1v1h-1zM179,467h1v1h-1zM179,469h1v1h-1zM179,471h1v1h-1zM179,473h1v1h-1zM179,475h1v1h-1zM179,477h1v1h-1zM179,479h1v1h-1zM179,481h1v1h-1zM179,483h1v1h-1zM179,485h1v1h-1zM179,487h1v1h-1zM179,489h1v1h-1zM179,491h1v1h-1zM179,493h1v1h-1zM179,495h1v1h-1zM179,497h1v1h-1zM179,499h1v1h-1zM179,501h1v1h-1zM179,503h1v1h-1zM179,505h1v1h-1zM179,507h1v1h-1zM179,509h1v1h-1zM179,511h1v1h-1zM179,513h1v1h-1zM179,515h1v1h-1zM179,517h1v1h-1zM179,519h1v1h-1zM179,521h1v1h-1zM179,523h1v1h-1zM179,525h1v1h-1zM179,527h1v1h-1zM179,529h1v1h-1zM179,531h1v1h-1zM179,533h1v1h-1zM179,535h1v1h-1zM179,537h1v1h-1zM179,539h1v1h-1zM179,541h1v1h-1zM179,543h1v1h-1zM179,545h1v1h-1zM179,547h1v1h-1zM179,549h1v1h-1zM179,551h1v1h-1zM179,553h1v1h-1zM179,555h1v1h-1zM179,557h1v1h-1zM179,559h1v1h-1zM179,561h1v1h-1zM179,563h1v1h-1zM179,565h1v1h-1zM179,567h1v1h-1zM179,569h1v1h-1zM179,571h1v1h-1zM179,573h1v1h-1zM179,575h1v1h-1zM179,577h1v1h-1zM179,579h1v1h-1zM179,581h1v1h-1zM179,583h1v1h-1zM179,585h1v1h-1zM179,587h1v1h-1zM179,589h1v1h-1zM179,591h1v1h-1zM179,593h1v1h-1zM179,595h1v1h-1zM179,597h1v1h-1zM179,599h1v1h-1zM179,601h1v1h-1zM179,603h1v1h-1zM179,605h1v1h-1zM179,607h1v1h-1zM179,609h1v1h-1zM179,611h1v1h-1zM179,613h1v1h-1zM179,615h1v1h-1zM179,617h1v1h-1zM179,619h1v1h-1zM179,621h1v1h-1zM179,623h1v1h-1zM179,625h1v1h-1zM179,627h1v1h-1zM179,629h1v1h-1zM179,631h1v1h-1zM179,633h1v1h-1zM179,635h1v1h-1zM179,637h1v1h-1zM179,639h1v1h-1zM179,641h1v1h-1zM179,643h1v1h-1zM179,645h1v1h-1zM179,647h1v1h-1zM179,649h1v1h-1zM179,651h1v1h-1zM179,653h1v1h-1zM179,655h1v1h-1zM179,657h1v1h-1zM179,659h1v1h-1zM179,661h1v1h-1zM179,663h1v1h-1zM179,665h1v1h-1zM179,667h1v1h-1zM179,669h1v1h-1zM179,671h1v1h-1zM179,673h1v1h-1zM179,673h1v1h-1zM181,673h1v1h-1zM183,673h1v1h-1zM185,673h1v1h-1zM187,673h1v1h-1zM189,673h1v1h-1zM191,673h1v1h-1zM193,673h1v1h-1zM195,673h1v1h-1zM197,673h1v1h-1zM199,673h1v1h-1zM201,673h1v1h-1zM203,673h1v1h-1z" fill="#007a00"/>
<path d="M180,498h1v1h-1zM182,498h1v1h-1zM184,498h1v1h-1zM186,498h1v1h-1zM188,498h1v1h-1zM190,498h1v1h-1zM192,498h1v1h-1zM194,498h1v1h-1zM196,498h1v1h-1zM198,498h1v1h-1zM200,498h1v1h-1zM202,498h1v1h-1zM204,498h1v1h-1z" fill="#007a00"/>
<path d="M181,597h1v1h-1zM183,597h1v1h-1zM185,597h1v1h-1zM187,597h1v1h-1zM189,597h1v1h-1zM191,597h1v1h-1zM193,597h1v1h-1zM195,597h1v1h-1zM197,597h1v1h-1zM199,597h1v1h-1zM201,597h1v1h-1zM203,597h1v1h-1z" fill="#007a00"/>
<path d="M179.5,496.0 l2.5,2.5 l-2.5,2.5 l-2.5,-2.5z" fill="#fff" stroke="#007a00" stroke-width="1"/><rect x="179" y="498.0" width="1" height="1" fill="#007a00"/>
<path d="M179.5,595.0 l2.5,2.5 l-2.5,2.5 l-2.5,-2.5z" fill="#fff" stroke="#007a00" stroke-width="1"/><rect x="179" y="597.0" width="1" height="1" fill="#007a00"/>
<path d="M310,342h1v1h-1zM312,342h1v1h-1zM314,342h1v1h-1zM316,342h1v1h-1zM317,343h1v1h-1zM317,345h1v1h-1zM317,347h1v1h-1zM317,349h1v1h-1zM317,351h1v1h-1zM317,353h1v1h-1zM317,355h1v1h-1zM317,357h1v1h-1zM317,359h1v1h-1zM317,361h1v1h-1zM317,363h1v1h-1zM317,365h1v1h-1zM317,367h1v1h-1zM317,369h1v1h-1zM317,371h1v1h-1zM317,373h1v1h-1zM317,375h1v1h-1zM317,377h1v1h-1zM317,379h1v1h-1zM317,381h1v1h-1zM317,383h1v1h-1zM317,385h1v1h-1zM317,387h1v1h-1zM317,387h1v1h-1zM319,387h1v1h-1zM321,387h1v1h-1zM323,387h1v1h-1zM325,387h1v1h-1zM327,387h1v1h-1zM329,387h1v1h-1zM331,387h1v1h-1zM333,387h1v1h-1zM335,387h1v1h-1zM337,387h1v1h-1zM339,387h1v1h-1zM341,387h1v1h-1zM343,387h1v1h-1zM345,387h1v1h-1zM347,387h1v1h-1zM349,387h1v1h-1zM351,387h1v1h-1zM353,387h1v1h-1zM355,387h1v1h-1zM357,387h1v1h-1zM357,369h1v1h-1zM357,371h1v1h-1zM357,373h1v1h-1zM357,375h1v1h-1zM357,377h1v1h-1zM357,379h1v1h-1zM357,381h1v1h-1zM357,383h1v1h-1zM357,385h1v1h-1zM357,387h1v1h-1z" fill="#007a00"/>
<path d="M313,425 h1 v-1 h2 v1 h1 M317,425 h1 v-1 h2 v1 h1 M321,425 h1 v-1 h2 v1 h1 M325,425 h1 v-1 h2 v1 h1 M329,425 h1 v-1 h2 v1 h1 M333,425 h1 v-1 h2 v1 h1 M337,425 h1 v-1 h2 v1 h1 M341,425 h1 v-1 h2 v1 h1 M345,425 h1 v-1 h2 v1 h1 M349,425 h1 v-1 h2 v1 h1 M353,425 h1 v-1 h2 v1 h1 M357,425 h1 v-1 h2 v1 h1 M361,425 h1 v-1 h2 v1 h1" fill="none" stroke="#ff00ff" stroke-width="1" shape-rendering="crispEdges"/>
<rect x="329" y="423" width="3" height="4" fill="#fff" />
<polyline points="330.5,420 330.5,430" fill="none" stroke="#138282" stroke-width="1" />
<rect x="178" y="517" width="3" height="1" fill="#fff" />
<rect x="179" y="517" width="1" height="1" fill="#007a00" />
<rect x="178" y="539" width="3" height="1" fill="#fff" />
<rect x="179" y="539" width="1" height="1" fill="#007a00" />
<rect x="178" y="555" width="3" height="1" fill="#fff" />
<rect x="179" y="555" width="1" height="1" fill="#007a00" />
<rect x="178" y="616" width="3" height="1" fill="#fff" />
<rect x="179" y="616" width="1" height="1" fill="#007a00" />
<rect x="178" y="635" width="3" height="1" fill="#fff" />
<rect x="179" y="635" width="1" height="1" fill="#007a00" />
<rect x="178" y="659" width="3" height="1" fill="#fff" />
<rect x="179" y="659" width="1" height="1" fill="#007a00" />
<rect x="138" y="517" width="3" height="1" fill="#fff" />
<rect x="139" y="517" width="1" height="1" fill="#0000ff" />
<rect x="316" y="374" width="3" height="1" fill="#fff" />
<rect x="317" y="374" width="1" height="1" fill="#007a00" />
<text x="205" y="309" fill="#000" font-size="12" text-anchor="start" >搜索设备</text>
<rect x="204" y="315" width="106" height="18" fill="#ffffd2" />
<rect x="204" y="333" width="106" height="19" fill="#fff" />
<rect x="204.5" y="315.5" width="105" height="37" fill="none" stroke="#000" stroke-width="1"/>
<path d="M208.5,317.5 h2.5 l1.5,1.5 v4 h-4 z" fill="#fff" stroke="#000" stroke-width="1"/>
<path d="M208,326 h2 v3 h-1 v1 h-1 v-1 h1 v-2 h-1z M208,331 h1 v1 h-1z M211,326 h2 v4 h-2z M211,331 h2 v1 h-2z" fill="#000"/>
<path d="M302.5,317.5 h2.5 l1.5,1.5 v4 h-4 z" fill="#fff" stroke="#000" stroke-width="1"/>
<path d="M302,326 h2 v3 h-1 v1 h-1 v-1 h1 v-2 h-1z M302,331 h1 v1 h-1z M305,326 h2 v4 h-2z M305,331 h2 v1 h-2z" fill="#000"/>
<path d="M217,322 h1 v2 h-1z M219,322 h2 v2 h-2z M222,322 h4 v2 h-4z M225,319 l4.5,4 l-4.5,4z" fill="#000"/>
<text x="264.0" y="328" fill="#000" font-size="12.5" text-anchor="middle" >ICSStudio6</text>
<line x1="204" y1="333.5" x2="310" y2="333.5" stroke="#000"/>
<text x="257.0" y="347" fill="#1a8a1a" font-size="12.4" text-anchor="middle" >FindDevice</text>
<path d="M306,340 l3,2.5 l-3,2.5 z" fill="#000"/>
<text x="202" y="392.5" fill="#000" font-size="12" text-anchor="start" >读取设备序列号</text>
<rect x="201" y="398" width="112" height="18" fill="#ffffd2" />
<rect x="201" y="416" width="112" height="19" fill="#fff" />
<rect x="201.5" y="398.5" width="111" height="37" fill="none" stroke="#000" stroke-width="1"/>
<path d="M205.5,400.5 h2.5 l1.5,1.5 v4 h-4 z" fill="#fff" stroke="#000" stroke-width="1"/>
<path d="M205,409 h2 v3 h-1 v1 h-1 v-1 h1 v-2 h-1z M205,414 h1 v1 h-1z M208,409 h2 v4 h-2z M208,414 h2 v1 h-2z" fill="#000"/>
<path d="M305.5,400.5 h2.5 l1.5,1.5 v4 h-4 z" fill="#fff" stroke="#000" stroke-width="1"/>
<path d="M305,409 h2 v3 h-1 v1 h-1 v-1 h1 v-2 h-1z M305,414 h1 v1 h-1z M308,409 h2 v4 h-2z M308,414 h2 v1 h-2z" fill="#000"/>
<path d="M214,405 h1 v2 h-1z M216,405 h2 v2 h-2z M219,405 h4 v2 h-4z M222,402 l4.5,4 l-4.5,4z" fill="#000"/>
<text x="264.0" y="411" fill="#000" font-size="12.5" text-anchor="middle" >ICSStudio6</text>
<line x1="201" y1="416.5" x2="313" y2="416.5" stroke="#000"/>
<text x="257.0" y="430" fill="#ff00ff" font-size="12.4" text-anchor="middle" >GetSerialNumber</text>
<path d="M309,423 l3,2.5 l-3,2.5 z" fill="#000"/>
<rect x="205" y="452" width="106" height="18" fill="#ffffd2" />
<rect x="205" y="470" width="106" height="57" fill="#fff" />
<rect x="205.5" y="452.5" width="105" height="75" fill="none" stroke="#000" stroke-width="1"/>
<path d="M209.5,454.5 h2.5 l1.5,1.5 v4 h-4 z" fill="#fff" stroke="#000" stroke-width="1"/>
<path d="M209,463 h2 v3 h-1 v1 h-1 v-1 h1 v-2 h-1z M209,468 h1 v1 h-1z M212,463 h2 v4 h-2z M212,468 h2 v1 h-2z" fill="#000"/>
<path d="M303.5,454.5 h2.5 l1.5,1.5 v4 h-4 z" fill="#fff" stroke="#000" stroke-width="1"/>
<path d="M303,463 h2 v3 h-1 v1 h-1 v-1 h1 v-2 h-1z M303,468 h1 v1 h-1z M306,463 h2 v4 h-2z M306,468 h2 v1 h-2z" fill="#000"/>
<path d="M218,459 h1 v2 h-1z M220,459 h2 v2 h-2z M223,459 h4 v2 h-4z M226,456 l4.5,4 l-4.5,4z" fill="#000"/>
<text x="265.0" y="465" fill="#000" font-size="12.5" text-anchor="middle" >ICSStudio6</text>
<line x1="205" y1="470.5" x2="311" y2="470.5" stroke="#000"/>
<text x="258.0" y="484" fill="#1a8a1a" font-size="12.4" text-anchor="middle" >SetVoltRange</text>
<path d="M307,477 l3,2.5 l-3,2.5 z" fill="#000"/>
<line x1="205" y1="489.5" x2="311" y2="489.5" stroke="#000"/>
<text x="258.0" y="503" fill="#1a8a1a" font-size="12.4" text-anchor="middle" >isAuto</text>
<path d="M307,496 l3,2.5 l-3,2.5 z" fill="#000"/>
<path d="M206,496.5 l2,1.5 v1 l-2,1.5 z" fill="#ff0000"/><path d="M208,497 l2.5,2 l-2.5,2 z" fill="#000"/>
<line x1="205" y1="508.5" x2="311" y2="508.5" stroke="#000"/>
<text x="258.0" y="522" fill="#0000ff" font-size="12.4" text-anchor="middle" >nRange</text>
<path d="M307,515 l3,2.5 l-3,2.5 z" fill="#000"/>
<path d="M206,515.5 l2,1.5 v1 l-2,1.5 z" fill="#ff0000"/><path d="M208,516 l2.5,2 l-2.5,2 z" fill="#000"/>
<rect x="203" y="551" width="110" height="18" fill="#ffffd2" />
<rect x="203" y="569" width="110" height="114" fill="#fff" />
<rect x="203.5" y="551.5" width="109" height="132" fill="none" stroke="#000" stroke-width="1"/>
<path d="M207.5,553.5 h2.5 l1.5,1.5 v4 h-4 z" fill="#fff" stroke="#000" stroke-width="1"/>
<path d="M207,562 h2 v3 h-1 v1 h-1 v-1 h1 v-2 h-1z M207,567 h1 v1 h-1z M210,562 h2 v4 h-2z M210,567 h2 v1 h-2z" fill="#000"/>
<path d="M305.5,553.5 h2.5 l1.5,1.5 v4 h-4 z" fill="#fff" stroke="#000" stroke-width="1"/>
<path d="M305,562 h2 v3 h-1 v1 h-1 v-1 h1 v-2 h-1z M305,567 h1 v1 h-1z M308,562 h2 v4 h-2z M308,567 h2 v1 h-2z" fill="#000"/>
<path d="M216,558 h1 v2 h-1z M218,558 h2 v2 h-2z M221,558 h4 v2 h-4z M224,555 l4.5,4 l-4.5,4z" fill="#000"/>
<text x="265.0" y="564" fill="#000" font-size="12.5" text-anchor="middle" >ICSStudio6</text>
<line x1="203" y1="569.5" x2="313" y2="569.5" stroke="#000"/>
<text x="258.0" y="583" fill="#1a8a1a" font-size="12.4" text-anchor="middle" >SetCurrentRange</text>
<path d="M309,576 l3,2.5 l-3,2.5 z" fill="#000"/>
<line x1="203" y1="588.5" x2="313" y2="588.5" stroke="#000"/>
<text x="258.0" y="602" fill="#1a8a1a" font-size="12.4" text-anchor="middle" >isAutoRange</text>
<path d="M309,595 l3,2.5 l-3,2.5 z" fill="#000"/>
<path d="M204,595.5 l2,1.5 v1 l-2,1.5 z" fill="#ff0000"/><path d="M206,596 l2.5,2 l-2.5,2 z" fill="#000"/>
<line x1="203" y1="607.5" x2="313" y2="607.5" stroke="#000"/>
<text x="258.0" y="621" fill="#0000ff" font-size="12.4" text-anchor="middle" >nRange</text>
<path d="M309,614 l3,2.5 l-3,2.5 z" fill="#000"/>
<path d="M204,614.5 l2,1.5 v1 l-2,1.5 z" fill="#ff0000"/><path d="M206,615 l2.5,2 l-2.5,2 z" fill="#000"/>
<line x1="203" y1="626.5" x2="313" y2="626.5" stroke="#000"/>
<text x="258.0" y="640" fill="#0000ff" font-size="12.4" text-anchor="middle" >nMinRange</text>
<path d="M309,633 l3,2.5 l-3,2.5 z" fill="#000"/>
<path d="M204,633.5 l2,1.5 v1 l-2,1.5 z" fill="#ff0000"/><path d="M206,634 l2.5,2 l-2.5,2 z" fill="#000"/>
<line x1="203" y1="645.5" x2="313" y2="645.5" stroke="#000"/>
<text x="258.0" y="659" fill="#0000ff" font-size="12.4" text-anchor="middle" >nMaxRange</text>
<path d="M309,652 l3,2.5 l-3,2.5 z" fill="#000"/>
<path d="M204,652.5 l2,1.5 v1 l-2,1.5 z" fill="#ff0000"/><path d="M206,653 l2.5,2 l-2.5,2 z" fill="#000"/>
<line x1="203" y1="664.5" x2="313" y2="664.5" stroke="#000"/>
<text x="258.0" y="678" fill="#1a8a1a" font-size="12.4" text-anchor="middle" >isOnlyInc</text>
<path d="M309,671 l3,2.5 l-3,2.5 z" fill="#000"/>
<path d="M204,671.5 l2,1.5 v1 l-2,1.5 z" fill="#ff0000"/><path d="M206,672 l2.5,2 l-2.5,2 z" fill="#000"/>
<rect x="168" y="448" width="16" height="14" fill="#007000" />
<rect x="170" y="450" width="12" height="10" fill="#fff" />
<rect x="171" y="451" width="10" height="8" fill="#007000" />
<path d="M173,453 h6 v1.5 h-2.2 v4 h-1.6 v-4 h-2.2z" fill="#fff"/>
<rect x="138" y="626" width="13" height="18" fill="#fff" stroke="#0000ff" stroke-width="2"/>
<text x="144.5" y="640" fill="#000" font-size="12.5" text-anchor="middle" >6</text>
<rect x="138" y="650" width="13" height="18" fill="#fff" stroke="#0000ff" stroke-width="2"/>
<text x="144.5" y="664" fill="#000" font-size="12.5" text-anchor="middle" >0</text>
<text x="339" y="325.5" fill="#000" font-size="12" text-anchor="start" >设备状态</text>
<rect x="338" y="330" width="38" height="38" fill="#007000" />
<rect x="339" y="331" width="36" height="36" fill="#fff" />
<rect x="341" y="333" width="32" height="32" fill="#007000" />
<rect x="342" y="334" width="30" height="30" fill="#e0e0e0" />
<rect x="349" y="359" width="16" height="9" fill="#007000" />
<rect x="350" y="360" width="14" height="6" fill="#fff" />
<rect x="350" y="366" width="14" height="1" fill="#fff" />
<text x="357.3" y="366.3" fill="#007000" font-size="6.8" text-anchor="middle" font-weight="bold" letter-spacing="0.5">TF</text>
<circle cx="356.5" cy="348.5" r="7" fill="#b0b0b0"/><circle cx="356.5" cy="348.5" r="5" fill="#22cc22"/><circle cx="355.5" cy="347.5" r="2" fill="#70ee70"/>
<path d="M340.5,345.5 l4,4 l-4,4 z" fill="#fff" stroke="#000" stroke-width="1"/>
<text x="366" y="400" fill="#000" font-size="12" text-anchor="start" >序列号</text>
<rect x="365" y="406" width="38" height="38" fill="#ff00ff" />
<rect x="366" y="407" width="36" height="36" fill="#fff" />
<rect x="368" y="409" width="32" height="32" fill="#ff00ff" />
<rect x="369" y="410" width="30" height="30" fill="#e0e0e0" />
<rect x="376" y="435" width="16" height="9" fill="#ff00ff" />
<rect x="377" y="436" width="14" height="6" fill="#fff" />
<rect x="377" y="442" width="14" height="1" fill="#fff" />
<text x="384.3" y="442.3" fill="#ff00ff" font-size="6.8" text-anchor="middle" font-weight="bold" letter-spacing="0.5">abc</text>
<rect x="370" y="419" width="27" height="11" fill="#a8a8a8" />
<rect x="371" y="420" width="26" height="10" fill="#cccccc" />
<text x="374.5" y="428" fill="#000" font-size="8" text-anchor="start" font-weight="bold">abc</text>
<path d="M367.5,421.5 l4,4 l-4,4 z" fill="#fff" stroke="#000" stroke-width="1"/>
<polyline points="413,626.5 437.5,626.5 437.5,420.5 502,420.5" fill="none" stroke="#ff7f00" stroke-width="1" />
<polyline points="426,729.5 454.5,729.5 454.5,439.5 502,439.5" fill="none" stroke="#ff7f00" stroke-width="1" />
<polyline points="445.5,356 445.5,458.5 502,458.5" fill="none" stroke="#ff7f00" stroke-width="1" />
<polyline points="471,734.5 466.5,734.5 466.5,477.5 502,477.5" fill="none" stroke="#ff7f00" stroke-width="1" />
<polyline points="542,731.5 518.5,731.5 518.5,651.5 485.5,651.5 485.5,496.5 502,496.5" fill="none" stroke="#ff7f00" stroke-width="1" />
<polyline points="475,401.5 502,401.5" fill="none" stroke="#ff7f00" stroke-width="1" />
<polyline points="524,612.5 539.5,612.5 539.5,571.5 492.5,571.5 492.5,515.5 502,515.5" fill="none" stroke="#0000ff" stroke-width="1" />
<rect x="445" y="370" width="1" height="3" fill="#fff" />
<rect x="445" y="371" width="1" height="1" fill="#138282" />
<rect x="445" y="419" width="1" height="3" fill="#fff" />
<rect x="445" y="420" width="1" height="1" fill="#ff7f00" />
<rect x="454" y="457" width="1" height="3" fill="#fff" />
<rect x="454" y="458" width="1" height="1" fill="#ff7f00" />
<text x="431" y="313.5" fill="#000" font-size="12" text-anchor="start" >电位增量（V）</text>
<rect x="430" y="319" width="38" height="38" fill="#ff7f00" />
<rect x="432" y="321" width="34" height="34" fill="#fff" />
<rect x="433" y="322" width="32" height="32" fill="#ff7f00" />
<rect x="434" y="323" width="30" height="30" fill="#e0e0e0" />
<rect x="441" y="348" width="16" height="9" fill="#ff7f00" />
<rect x="442" y="349" width="14" height="8" fill="#fff" />
<text x="449.3" y="355.3" fill="#ff7f00" font-size="6.8" text-anchor="middle" font-weight="bold" letter-spacing="0.5">DBL</text>
<rect x="434" y="331" width="29" height="13" fill="#ff7f00" />
<rect x="435" y="332" width="27" height="11" fill="#fff" />
<text x="437" y="341" fill="#ff7f00" font-size="9" text-anchor="start" letter-spacing="0.3">1.23</text>
<path d="M462.5,334.5 l4,4 l-4,4 z" fill="#fff" stroke="#000" stroke-width="1"/>
<text x="502" y="349.5" fill="#000" font-size="12" text-anchor="start" >发送恒电位命令</text>
<rect x="501" y="355" width="108" height="18" fill="#ffffd2" />
<rect x="501" y="373" width="108" height="152" fill="#fff" />
<rect x="501.5" y="355.5" width="107" height="170" fill="none" stroke="#000" stroke-width="1"/>
<path d="M505.5,357.5 h2.5 l1.5,1.5 v4 h-4 z" fill="#fff" stroke="#000" stroke-width="1"/>
<path d="M505,366 h2 v3 h-1 v1 h-1 v-1 h1 v-2 h-1z M505,371 h1 v1 h-1z M508,366 h2 v4 h-2z M508,371 h2 v1 h-2z" fill="#000"/>
<path d="M601.5,357.5 h2.5 l1.5,1.5 v4 h-4 z" fill="#fff" stroke="#000" stroke-width="1"/>
<path d="M601,366 h2 v3 h-1 v1 h-1 v-1 h1 v-2 h-1z M601,371 h1 v1 h-1z M604,366 h2 v4 h-2z M604,371 h2 v1 h-2z" fill="#000"/>
<path d="M514,362 h1 v2 h-1z M516,362 h2 v2 h-2z M519,362 h4 v2 h-4z M522,359 l4.5,4 l-4.5,4z" fill="#000"/>
<text x="562.0" y="368" fill="#000" font-size="12.5" text-anchor="middle" >ICSStudio6</text>
<line x1="501" y1="373.5" x2="609" y2="373.5" stroke="#000"/>
<text x="555.0" y="387" fill="#1a8a1a" font-size="12.4" text-anchor="middle" >SetSWVAParams</text>
<path d="M605,380 l3,2.5 l-3,2.5 z" fill="#000"/>
<line x1="501" y1="392.5" x2="609" y2="392.5" stroke="#000"/>
<text x="555.0" y="406" fill="#ff7f1a" font-size="12.4" text-anchor="middle" >fWaitTime</text>
<path d="M605,399 l3,2.5 l-3,2.5 z" fill="#000"/>
<path d="M502,399.5 l2,1.5 v1 l-2,1.5 z" fill="#ff0000"/><path d="M504,400 l2.5,2 l-2.5,2 z" fill="#000"/>
<line x1="501" y1="411.5" x2="609" y2="411.5" stroke="#000"/>
<text x="555.0" y="425" fill="#ff7f1a" font-size="12.4" text-anchor="middle" >fInitE</text>
<path d="M605,418 l3,2.5 l-3,2.5 z" fill="#000"/>
<path d="M502,418.5 l2,1.5 v1 l-2,1.5 z" fill="#ff0000"/><path d="M504,419 l2.5,2 l-2.5,2 z" fill="#000"/>
<line x1="501" y1="430.5" x2="609" y2="430.5" stroke="#000"/>
<text x="555.0" y="444" fill="#ff7f1a" font-size="12.4" text-anchor="middle" >fFinalE</text>
<path d="M605,437 l3,2.5 l-3,2.5 z" fill="#000"/>
<path d="M502,437.5 l2,1.5 v1 l-2,1.5 z" fill="#ff0000"/><path d="M504,438 l2.5,2 l-2.5,2 z" fill="#000"/>
<line x1="501" y1="449.5" x2="609" y2="449.5" stroke="#000"/>
<text x="555.0" y="463" fill="#ff7f1a" font-size="12.4" text-anchor="middle" >fIncE</text>
<path d="M605,456 l3,2.5 l-3,2.5 z" fill="#000"/>
<path d="M502,456.5 l2,1.5 v1 l-2,1.5 z" fill="#ff0000"/><path d="M504,457 l2.5,2 l-2.5,2 z" fill="#000"/>
<line x1="501" y1="468.5" x2="609" y2="468.5" stroke="#000"/>
<text x="555.0" y="482" fill="#ff7f1a" font-size="12.4" text-anchor="middle" >fAmplitude</text>
<path d="M605,475 l3,2.5 l-3,2.5 z" fill="#000"/>
<path d="M502,475.5 l2,1.5 v1 l-2,1.5 z" fill="#ff0000"/><path d="M504,476 l2.5,2 l-2.5,2 z" fill="#000"/>
<line x1="501" y1="487.5" x2="609" y2="487.5" stroke="#000"/>
<text x="555.0" y="501" fill="#ff7f1a" font-size="12.4" text-anchor="middle" >fFrequency</text>
<path d="M605,494 l3,2.5 l-3,2.5 z" fill="#000"/>
<path d="M502,494.5 l2,1.5 v1 l-2,1.5 z" fill="#ff0000"/><path d="M504,495 l2.5,2 l-2.5,2 z" fill="#000"/>
<line x1="501" y1="506.5" x2="609" y2="506.5" stroke="#000"/>
<text x="555.0" y="520" fill="#0000ff" font-size="12.4" text-anchor="middle" >nSampleWidth</text>
<path d="M605,513 l3,2.5 l-3,2.5 z" fill="#000"/>
<path d="M502,513.5 l2,1.5 v1 l-2,1.5 z" fill="#ff0000"/><path d="M504,514 l2.5,2 l-2.5,2 z" fill="#000"/>
<rect x="462" y="393" width="12" height="18" fill="#fff" stroke="#ff7f00" stroke-width="2"/>
<text x="468.0" y="407" fill="#000" font-size="12.5" text-anchor="middle" >3</text>
<rect x="378.5" y="588.5" width="52" height="18" fill="#ffffe0" stroke="#000"/>
<text x="380" y="601" fill="#000" font-size="12" text-anchor="start" >初始电位</text>
<rect x="376" y="607" width="38" height="38" fill="#ff7f00" />
<rect x="378" y="609" width="34" height="34" fill="#fff" />
<rect x="379" y="610" width="32" height="32" fill="#ff7f00" />
<rect x="380" y="611" width="30" height="30" fill="#e0e0e0" />
<rect x="387" y="636" width="16" height="9" fill="#ff7f00" />
<rect x="388" y="637" width="14" height="8" fill="#fff" />
<text x="395.3" y="643.3" fill="#ff7f00" font-size="6.8" text-anchor="middle" font-weight="bold" letter-spacing="0.5">DBL</text>
<rect x="380" y="619" width="29" height="13" fill="#ff7f00" />
<rect x="381" y="620" width="27" height="11" fill="#fff" />
<text x="383" y="629" fill="#ff7f00" font-size="9" text-anchor="start" letter-spacing="0.3">1.23</text>
<path d="M408.5,622.5 l4,4 l-4,4 z" fill="#fff" stroke="#000" stroke-width="1"/>
<text x="390" y="704.5" fill="#000" font-size="12" text-anchor="start" >终止电位(V)</text>
<rect x="389" y="710" width="38" height="38" fill="#ff7f00" />
<rect x="391" y="712" width="34" height="34" fill="#fff" />
<rect x="392" y="713" width="32" height="32" fill="#ff7f00" />
<rect x="393" y="714" width="30" height="30" fill="#e0e0e0" />
<rect x="400" y="739" width="16" height="9" fill="#ff7f00" />
<rect x="401" y="740" width="14" height="8" fill="#fff" />
<text x="408.3" y="746.3" fill="#ff7f00" font-size="6.8" text-anchor="middle" font-weight="bold" letter-spacing="0.5">DBL</text>
<rect x="393" y="722" width="29" height="13" fill="#ff7f00" />
<rect x="394" y="723" width="27" height="11" fill="#fff" />
<text x="396" y="732" fill="#ff7f00" font-size="9" text-anchor="start" letter-spacing="0.3">1.23</text>
<path d="M421.5,725.5 l4,4 l-4,4 z" fill="#fff" stroke="#000" stroke-width="1"/>
<text x="472" y="709" fill="#000" font-size="12" text-anchor="start" >振幅（V）</text>
<rect x="471" y="715" width="38" height="38" fill="#ff7f00" />
<rect x="473" y="717" width="34" height="34" fill="#fff" />
<rect x="474" y="718" width="32" height="32" fill="#ff7f00" />
<rect x="475" y="719" width="30" height="30" fill="#e0e0e0" />
<rect x="482" y="744" width="16" height="9" fill="#ff7f00" />
<rect x="483" y="745" width="14" height="8" fill="#fff" />
<text x="490.3" y="751.3" fill="#ff7f00" font-size="6.8" text-anchor="middle" font-weight="bold" letter-spacing="0.5">DBL</text>
<rect x="475" y="727" width="29" height="13" fill="#ff7f00" />
<rect x="476" y="728" width="27" height="11" fill="#fff" />
<text x="478" y="737" fill="#ff7f00" font-size="9" text-anchor="start" letter-spacing="0.3">1.23</text>
<path d="M503.5,730.5 l4,4 l-4,4 z" fill="#fff" stroke="#000" stroke-width="1"/>
<text x="543" y="706" fill="#000" font-size="12" text-anchor="start" >频率</text>
<rect x="542" y="712" width="38" height="38" fill="#ff7f00" />
<rect x="544" y="714" width="34" height="34" fill="#fff" />
<rect x="545" y="715" width="32" height="32" fill="#ff7f00" />
<rect x="546" y="716" width="30" height="30" fill="#e0e0e0" />
<rect x="553" y="741" width="16" height="9" fill="#ff7f00" />
<rect x="554" y="742" width="14" height="8" fill="#fff" />
<text x="561.3" y="748.3" fill="#ff7f00" font-size="6.8" text-anchor="middle" font-weight="bold" letter-spacing="0.5">DBL</text>
<rect x="546" y="724" width="29" height="13" fill="#ff7f00" />
<rect x="547" y="725" width="27" height="11" fill="#fff" />
<text x="549" y="734" fill="#ff7f00" font-size="9" text-anchor="start" letter-spacing="0.3">1.23</text>
<path d="M574.5,727.5 l4,4 l-4,4 z" fill="#fff" stroke="#000" stroke-width="1"/>
<rect x="505" y="603" width="19" height="18" fill="#fff" stroke="#0000ff" stroke-width="2"/>
<text x="514.5" y="617" fill="#000" font-size="12.5" text-anchor="middle" >10</text>
<text x="749" y="347.5" fill="#000" font-size="12" text-anchor="start" >开始</text>
<rect x="748" y="354" width="106" height="18" fill="#ffffd2" />
<rect x="748" y="372" width="106" height="19" fill="#fff" />
<rect x="748.5" y="354.5" width="105" height="37" fill="none" stroke="#000" stroke-width="1"/>
<path d="M752.5,356.5 h2.5 l1.5,1.5 v4 h-4 z" fill="#fff" stroke="#000" stroke-width="1"/>
<path d="M752,365 h2 v3 h-1 v1 h-1 v-1 h1 v-2 h-1z M752,370 h1 v1 h-1z M755,365 h2 v4 h-2z M755,370 h2 v1 h-2z" fill="#000"/>
<path d="M846.5,356.5 h2.5 l1.5,1.5 v4 h-4 z" fill="#fff" stroke="#000" stroke-width="1"/>
<path d="M846,365 h2 v3 h-1 v1 h-1 v-1 h1 v-2 h-1z M846,370 h1 v1 h-1z M849,365 h2 v4 h-2z M849,370 h2 v1 h-2z" fill="#000"/>
<path d="M761,361 h1 v2 h-1z M763,361 h2 v2 h-2z M766,361 h4 v2 h-4z M769,358 l4.5,4 l-4.5,4z" fill="#000"/>
<text x="808.0" y="367" fill="#000" font-size="12.5" text-anchor="middle" >ICSStudio6</text>
<line x1="748" y1="372.5" x2="854" y2="372.5" stroke="#000"/>
<text x="801.0" y="386" fill="#1a8a1a" font-size="12.4" text-anchor="middle" >DeviceStart</text>
<path d="M850,379 l3,2.5 l-3,2.5 z" fill="#000"/>
<polyline points="759.5,472 759.5,483.5" fill="none" stroke="#138282" stroke-width="1" />
<polyline points="737.5,528 737.5,483.5 995,483.5" fill="none" stroke="#138282" stroke-width="1" />
<polyline points="1000,483.5 1024.5,483.5 1024.5,647" fill="none" stroke="#138282" stroke-width="1" />
<polyline points="830.5,528 830.5,509.5 699.5,509.5 699.5,661.5 740,661.5" fill="none" stroke="#138282" stroke-width="1" />
<rect x="737" y="508" width="1" height="3" fill="#fff" />
<rect x="737" y="509" width="1" height="1" fill="#138282" />
<circle cx="759.5" cy="483.5" r="2.2" fill="#148080"/>
<path d="M653,464 H995 Q1000,464 1000,469 V736 H653 Q648,736 648,731 V469 Q648,464 653,464 Z M654,470 V730 H994 V470 Z" fill="#808080" fill-rule="evenodd"/>
<rect x="994" y="726" width="6" height="2" fill="#fff" />
<rect x="992" y="728" width="8" height="2" fill="#808080" />
<rect x="996" y="734" width="4" height="2" fill="#fff" />
<rect x="755" y="464" width="9" height="9" fill="#148080" />
<rect x="755.5" y="464.5" width="8" height="8" fill="none" stroke="#003838"/>
<rect x="991" y="479" width="9" height="9" fill="#148080" />
<rect x="991.5" y="479.5" width="8" height="8" fill="none" stroke="#003838"/>
<rect x="658" y="710" width="16" height="16" fill="#0000ff" />
<rect x="660" y="712" width="12" height="12" fill="#fffcd0" />
<rect x="665" y="714" width="2.3" height="1.4" rx="0.6" fill="#0000ff"/><rect x="665" y="716.3" width="2.3" height="6.7" rx="0.6" fill="#0000ff"/>
<polyline points="838,575.5 845.5,575.5 845.5,532.5 868,532.5" fill="none" stroke="#8c0a8c" stroke-width="3" stroke-linejoin="miter" stroke-linecap="square"/>
<polyline points="838,575.5 845.5,575.5 845.5,532.5 868,532.5" fill="none" stroke="#ffffff" stroke-width="1" stroke-dasharray="1 1" />
<polyline points="838,594.5 843.5,594.5 843.5,599.5 866,599.5" fill="none" stroke="#8c0a8c" stroke-width="3" stroke-linejoin="miter" stroke-linecap="square"/>
<polyline points="838,594.5 843.5,594.5 843.5,599.5 866,599.5" fill="none" stroke="#ffffff" stroke-width="1" stroke-dasharray="1 1" />
<polyline points="900,533 913,533 913,572 921,572" fill="none" stroke="#ff7f00" stroke-width="2" />
<polyline points="898,599 911,599 911,641 926,641" fill="none" stroke="#ff7f00" stroke-width="2" />
<path d="M848,684h1v1h-1zM850,684h1v1h-1zM852,684h1v1h-1zM854,684h1v1h-1zM856,684h1v1h-1zM858,684h1v1h-1zM860,684h1v1h-1zM862,684h1v1h-1zM864,684h1v1h-1zM866,684h1v1h-1zM868,684h1v1h-1zM870,684h1v1h-1zM872,684h1v1h-1zM874,684h1v1h-1zM876,684h1v1h-1zM878,684h1v1h-1zM880,684h1v1h-1zM882,684h1v1h-1zM884,684h1v1h-1zM886,684h1v1h-1zM888,684h1v1h-1zM890,684h1v1h-1zM892,684h1v1h-1zM894,684h1v1h-1zM896,684h1v1h-1zM896,684h1v1h-1zM896,686h1v1h-1zM896,688h1v1h-1zM896,690h1v1h-1zM896,692h1v1h-1zM896,694h1v1h-1zM896,696h1v1h-1zM896,698h1v1h-1zM896,700h1v1h-1zM896,702h1v1h-1zM896,704h1v1h-1zM896,706h1v1h-1zM896,708h1v1h-1zM896,710h1v1h-1zM896,712h1v1h-1zM897,713h1v1h-1zM899,713h1v1h-1zM901,713h1v1h-1zM903,713h1v1h-1zM905,713h1v1h-1zM907,713h1v1h-1zM909,713h1v1h-1zM911,713h1v1h-1zM913,713h1v1h-1zM915,713h1v1h-1zM917,713h1v1h-1zM919,713h1v1h-1zM921,713h1v1h-1zM923,713h1v1h-1zM925,713h1v1h-1zM927,713h1v1h-1zM929,713h1v1h-1zM931,713h1v1h-1zM933,713h1v1h-1zM935,713h1v1h-1zM937,713h1v1h-1zM939,713h1v1h-1zM941,713h1v1h-1zM943,713h1v1h-1zM945,713h1v1h-1zM947,713h1v1h-1zM949,713h1v1h-1zM951,713h1v1h-1zM953,713h1v1h-1zM955,713h1v1h-1zM957,713h1v1h-1zM959,713h1v1h-1zM961,713h1v1h-1zM963,713h1v1h-1zM965,713h1v1h-1zM967,713h1v1h-1zM969,713h1v1h-1z" fill="#007a00"/>
<polyline points="942,507.5 949,507.5" fill="none" stroke="#0000ff" stroke-width="1" />
<rect x="729.5" y="527.5" width="109" height="98" fill="none" stroke="#ff0000" stroke-width="1"/>
<rect x="731" y="529" width="106" height="18" fill="#ffffd2" />
<rect x="731" y="547" width="106" height="76" fill="#fff" />
<rect x="731.5" y="529.5" width="105" height="94" fill="none" stroke="#000" stroke-width="1"/>
<path d="M735.5,531.5 h2.5 l1.5,1.5 v4 h-4 z" fill="#fff" stroke="#000" stroke-width="1"/>
<path d="M735,540 h2 v3 h-1 v1 h-1 v-1 h1 v-2 h-1z M735,545 h1 v1 h-1z M738,540 h2 v4 h-2z M738,545 h2 v1 h-2z" fill="#000"/>
<path d="M829.5,531.5 h2.5 l1.5,1.5 v4 h-4 z" fill="#fff" stroke="#000" stroke-width="1"/>
<path d="M829,540 h2 v3 h-1 v1 h-1 v-1 h1 v-2 h-1z M829,545 h1 v1 h-1z M832,540 h2 v4 h-2z M832,545 h2 v1 h-2z" fill="#000"/>
<path d="M744,536 h1 v2 h-1z M746,536 h2 v2 h-2z M749,536 h4 v2 h-4z M752,533 l4.5,4 l-4.5,4z" fill="#000"/>
<text x="791.0" y="542" fill="#000" font-size="12.5" text-anchor="middle" >ICSStudio6</text>
<line x1="731" y1="547.5" x2="837" y2="547.5" stroke="#000"/>
<text x="784.0" y="561" fill="#1a8a1a" font-size="12.4" text-anchor="middle" >GetValues</text>
<path d="M833,554 l3,2.5 l-3,2.5 z" fill="#000"/>
<line x1="731" y1="566.5" x2="837" y2="566.5" stroke="#000"/>
<text x="784.0" y="580" fill="#9c139c" font-size="12.4" text-anchor="middle" >dVoltValues</text>
<path d="M833,573 l3,2.5 l-3,2.5 z" fill="#000"/>
<line x1="731" y1="585.5" x2="837" y2="585.5" stroke="#000"/>
<text x="784.0" y="599" fill="#9c139c" font-size="12.4" text-anchor="middle" >dCurrValues</text>
<path d="M833,592 l3,2.5 l-3,2.5 z" fill="#000"/>
<line x1="731" y1="604.5" x2="837" y2="604.5" stroke="#000"/>
<text x="784.0" y="618" fill="#9c139c" font-size="12.4" text-anchor="middle" >dTimeValues</text>
<path d="M833,611 l3,2.5 l-3,2.5 z" fill="#000"/>
<rect x="739.5" y="655.5" width="109" height="41" fill="none" stroke="#ff0000" stroke-width="1"/>
<rect x="741" y="657" width="106" height="18" fill="#ffffd2" />
<rect x="741" y="675" width="106" height="19" fill="#fff" />
<rect x="741.5" y="657.5" width="105" height="37" fill="none" stroke="#000" stroke-width="1"/>
<path d="M745.5,659.5 h2.5 l1.5,1.5 v4 h-4 z" fill="#fff" stroke="#000" stroke-width="1"/>
<path d="M745,668 h2 v3 h-1 v1 h-1 v-1 h1 v-2 h-1z M745,673 h1 v1 h-1z M748,668 h2 v4 h-2z M748,673 h2 v1 h-2z" fill="#000"/>
<path d="M839.5,659.5 h2.5 l1.5,1.5 v4 h-4 z" fill="#fff" stroke="#000" stroke-width="1"/>
<path d="M839,668 h2 v3 h-1 v1 h-1 v-1 h1 v-2 h-1z M839,673 h1 v1 h-1z M842,668 h2 v4 h-2z M842,673 h2 v1 h-2z" fill="#000"/>
<path d="M754,664 h1 v2 h-1z M756,664 h2 v2 h-2z M759,664 h4 v2 h-4z M762,661 l4.5,4 l-4.5,4z" fill="#000"/>
<text x="801.0" y="670" fill="#000" font-size="12.5" text-anchor="middle" >ICSStudio6</text>
<line x1="741" y1="675.5" x2="847" y2="675.5" stroke="#000"/>
<text x="794.0" y="689" fill="#1a8a1a" font-size="12.4" text-anchor="middle" >ExpIsEnd</text>
<path d="M843,682 l3,2.5 l-3,2.5 z" fill="#000"/>
<rect x="868.5" y="529.5" width="31" height="31" fill="#ffffd2" stroke="#000"/>
<path d="M885.30,538.82 L888.32,539.21 L888.32,542.79 L885.30,543.18 L885.15,543.56 L887.00,545.97 L884.47,548.50 L882.06,546.65 L881.68,546.80 L881.29,549.82 L877.71,549.82 L877.32,546.80 L876.94,546.65 L874.53,548.50 L872.00,545.97 L873.85,543.56 L873.70,543.18 L870.68,542.79 L870.68,539.21 L873.70,538.82 L873.85,538.44 L872.00,536.03 L874.53,533.50 L876.94,535.35 L877.32,535.20 L877.71,532.18 L881.29,532.18 L881.68,535.20 L882.06,535.35 L884.47,533.50 L887.00,536.03 L885.15,538.44Z" fill="url(#checker)" stroke="#000" stroke-width="1"/>
<circle cx="879.5" cy="541" r="2.6" fill="#fffbd0" stroke="#000" stroke-width="1"/>
<path d="M889,539.5 h4.5 v5" fill="none" stroke="#000" stroke-width="1.8"/><path d="M890.5,544 h6 l-3,3.5z" fill="#000"/>
<rect x="887" y="548" width="11" height="11" fill="#000"/><rect x="889" y="550" width="7" height="7" fill="#fffde0"/><rect x="890" y="551" width="5" height="1" fill="#000"/><rect x="890" y="553" width="2" height="3" fill="#000"/><rect x="893" y="555" width="1" height="1" fill="#000"/>
<rect x="866.5" y="595.5" width="31" height="31" fill="#ffffd2" stroke="#000"/>
<path d="M883.30,604.82 L886.32,605.21 L886.32,608.79 L883.30,609.18 L883.15,609.56 L885.00,611.97 L882.47,614.50 L880.06,612.65 L879.68,612.80 L879.29,615.82 L875.71,615.82 L875.32,612.80 L874.94,612.65 L872.53,614.50 L870.00,611.97 L871.85,609.56 L871.70,609.18 L868.68,608.79 L868.68,605.21 L871.70,604.82 L871.85,604.44 L870.00,602.03 L872.53,599.50 L874.94,601.35 L875.32,601.20 L875.71,598.18 L879.29,598.18 L879.68,601.20 L880.06,601.35 L882.47,599.50 L885.00,602.03 L883.15,604.44Z" fill="url(#checker)" stroke="#000" stroke-width="1"/>
<circle cx="877.5" cy="607" r="2.6" fill="#fffbd0" stroke="#000" stroke-width="1"/>
<path d="M887,605.5 h4.5 v5" fill="none" stroke="#000" stroke-width="1.8"/><path d="M888.5,610 h6 l-3,3.5z" fill="#000"/>
<rect x="885" y="614" width="11" height="11" fill="#000"/><rect x="887" y="616" width="7" height="7" fill="#fffde0"/><rect x="888" y="617" width="5" height="1" fill="#000"/><rect x="888" y="619" width="2" height="3" fill="#000"/><rect x="891" y="621" width="1" height="1" fill="#000"/>
<text x="922" y="547.5" fill="#000" font-size="12" text-anchor="start" >电位-点数</text>
<rect x="921" y="553" width="38" height="38" fill="#ff7f00" />
<rect x="922" y="554" width="36" height="36" fill="#fff" />
<rect x="924" y="556" width="32" height="32" fill="#ff7f00" />
<rect x="925" y="557" width="30" height="30" fill="#e0e0e0" />
<rect x="932" y="582" width="16" height="9" fill="#ff7f00" />
<rect x="933" y="583" width="14" height="6" fill="#fff" />
<rect x="933" y="589" width="14" height="1" fill="#fff" />
<text x="940.3" y="589.3" fill="#ff7f00" font-size="6.8" text-anchor="middle" font-weight="bold" letter-spacing="0.5">SGL</text>
<rect x="925" y="557" width="30" height="27" fill="#c0c0c0" />
<rect x="925" y="584" width="30" height="1" fill="#404040" />
<rect x="925" y="585" width="30" height="2" fill="#dde8f0" />
<rect x="932" y="559" width="18" height="18" fill="#000" />
<line x1="933.5" y1="559" x2="933.5" y2="577" stroke="#3a8080" stroke-width="1"/>
<line x1="932" y1="561.5" x2="950" y2="561.5" stroke="#3a8080" stroke-width="1"/>
<line x1="938.5" y1="559" x2="938.5" y2="577" stroke="#3a8080" stroke-width="1"/>
<line x1="932" y1="566.5" x2="950" y2="566.5" stroke="#3a8080" stroke-width="1"/>
<line x1="943.5" y1="559" x2="943.5" y2="577" stroke="#3a8080" stroke-width="1"/>
<line x1="932" y1="571.5" x2="950" y2="571.5" stroke="#3a8080" stroke-width="1"/>
<line x1="948.5" y1="559" x2="948.5" y2="577" stroke="#3a8080" stroke-width="1"/>
<line x1="932" y1="576.5" x2="950" y2="576.5" stroke="#3a8080" stroke-width="1"/>
<path d="M932,569.5 h3 l4,-3.5 l-1,-5 l1,5 l4,6 l3,-4 l3,3 h1" fill="none" stroke="#fff" stroke-width="1"/>
<text x="926.5" y="564" fill="#000" font-size="5.5" text-anchor="start" font-weight="bold">2</text>
<text x="928" y="571" fill="#000" font-size="5.5" text-anchor="start" font-weight="bold">1</text>
<text x="927" y="577.5" fill="#000" font-size="5.5" text-anchor="start" font-weight="bold">0</text>
<text x="930" y="582" fill="#000" font-size="5" text-anchor="start" font-weight="bold">0.0</text>
<text x="946" y="582" fill="#000" font-size="5" text-anchor="start" font-weight="bold">10</text>
<rect x="932" y="582" width="16" height="9" fill="#ff7f00" />
<rect x="933" y="583" width="14" height="6" fill="#fff" />
<rect x="933" y="589" width="14" height="1" fill="#fff" />
<text x="940" y="589" fill="#ff7f00" font-size="6" text-anchor="middle" font-weight="bold" letter-spacing="0.6">SGL</text>
<path d="M923.5,568.5 l4,4 l-4,4 z" fill="#fff" stroke="#000" stroke-width="1"/>
<text x="927" y="616" fill="#000" font-size="12" text-anchor="start" >电流图</text>
<rect x="926" y="622" width="38" height="38" fill="#ff7f00" />
<rect x="927" y="623" width="36" height="36" fill="#fff" />
<rect x="929" y="625" width="32" height="32" fill="#ff7f00" />
<rect x="930" y="626" width="30" height="30" fill="#e0e0e0" />
<rect x="937" y="651" width="16" height="9" fill="#ff7f00" />
<rect x="938" y="652" width="14" height="6" fill="#fff" />
<rect x="938" y="658" width="14" height="1" fill="#fff" />
<text x="945.3" y="658.3" fill="#ff7f00" font-size="6.8" text-anchor="middle" font-weight="bold" letter-spacing="0.5">SGL</text>
<rect x="930" y="626" width="30" height="27" fill="#c0c0c0" />
<rect x="930" y="653" width="30" height="1" fill="#404040" />
<rect x="930" y="654" width="30" height="2" fill="#dde8f0" />
<rect x="937" y="628" width="18" height="18" fill="#000" />
<line x1="938.5" y1="628" x2="938.5" y2="646" stroke="#3a8080" stroke-width="1"/>
<line x1="937" y1="630.5" x2="955" y2="630.5" stroke="#3a8080" stroke-width="1"/>
<line x1="943.5" y1="628" x2="943.5" y2="646" stroke="#3a8080" stroke-width="1"/>
<line x1="937" y1="635.5" x2="955" y2="635.5" stroke="#3a8080" stroke-width="1"/>
<line x1="948.5" y1="628" x2="948.5" y2="646" stroke="#3a8080" stroke-width="1"/>
<line x1="937" y1="640.5" x2="955" y2="640.5" stroke="#3a8080" stroke-width="1"/>
<line x1="953.5" y1="628" x2="953.5" y2="646" stroke="#3a8080" stroke-width="1"/>
<line x1="937" y1="645.5" x2="955" y2="645.5" stroke="#3a8080" stroke-width="1"/>
<path d="M937,638.5 h3 l4,-3.5 l-1,-5 l1,5 l4,6 l3,-4 l3,3 h1" fill="none" stroke="#fff" stroke-width="1"/>
<text x="931.5" y="633" fill="#000" font-size="5.5" text-anchor="start" font-weight="bold">2</text>
<text x="933" y="640" fill="#000" font-size="5.5" text-anchor="start" font-weight="bold">1</text>
<text x="932" y="646.5" fill="#000" font-size="5.5" text-anchor="start" font-weight="bold">0</text>
<text x="935" y="651" fill="#000" font-size="5" text-anchor="start" font-weight="bold">0.0</text>
<text x="951" y="651" fill="#000" font-size="5" text-anchor="start" font-weight="bold">10</text>
<rect x="937" y="651" width="16" height="9" fill="#ff7f00" />
<rect x="938" y="652" width="14" height="6" fill="#fff" />
<rect x="938" y="658" width="14" height="1" fill="#fff" />
<text x="945" y="658" fill="#ff7f00" font-size="6" text-anchor="middle" font-weight="bold" letter-spacing="0.6">SGL</text>
<path d="M928.5,637.5 l4,4 l-4,4 z" fill="#fff" stroke="#000" stroke-width="1"/>
<rect x="915" y="498" width="26" height="19" fill="#fff" stroke="#0000ff" stroke-width="2"/>
<text x="928.0" y="513" fill="#000" font-size="12.5" text-anchor="middle" >100</text>
<rect x="949.5" y="491.5" width="31" height="31" fill="#ffffd2" stroke="#000"/>
<path d="M961,495 L963,493 H970 L972,495 L975,512.5 L975.5,516 L973,519 L971.5,520 H958 V516.5 L957,515.5 V513 L958.5,513 Z" fill="#000"/>
<path d="M962.2,495.8 H969.3 L971.3,512.6 H959.7 Z" fill="#fffbd0"/>
<rect x="959" y="514.6" width="12.5" height="4" fill="#fffbd0"/>
<path d="M964.5,515 l1.6,1.6 l-1.6,1.6 l-1.6,-1.6z" fill="none" stroke="#000" stroke-width="0.9"/>
<rect x="964" y="496" width="2" height="1" fill="#000"/>
<rect x="964" y="499" width="2" height="1" fill="#000"/>
<rect x="964" y="502" width="2" height="1" fill="#000"/>
<rect x="964" y="504" width="2" height="1" fill="#000"/>
<rect x="964" y="506" width="2" height="1" fill="#000"/>
<rect x="964" y="508" width="2" height="1" fill="#000"/>
<rect x="964" y="510" width="2" height="1" fill="#000"/>
<rect x="964" y="512" width="3" height="1" fill="#000"/>
<path d="M955,496 L964.5,512.5" stroke="#000" stroke-width="1"/><circle cx="957.8" cy="500.6" r="1.9" fill="#000"/>
<rect x="970.5" y="705.5" width="15" height="15" fill="#fffde0" stroke="#007000" stroke-width="1"/><rect x="971" y="706" width="14" height="14" fill="none" stroke="#007000" stroke-width="0.6"/>
<path d="M975.5,709 h5 l2.5,2.5 v4 l-2.5,2.5 h-5 l-2.5,-2.5 v-4z" fill="#fff" stroke="#000" stroke-width="1"/>
<path d="M976.3,710.5 h3.4 l1.8,1.8 v2.8 l-1.8,1.8 h-3.4 l-1.8,-1.8 v-2.8z" fill="#ff0000"/>
<rect x="1019.5" y="647.5" width="31" height="31" fill="#ffffd2" stroke="#000"/>
<rect x="1022" y="654" width="1" height="1" fill="#000"/>
<rect x="1023" y="654" width="1" height="1" fill="#000"/>
<rect x="1025" y="654" width="1" height="1" fill="#000"/>
<rect x="1027" y="654" width="1" height="1" fill="#000"/>
<rect x="1022" y="656" width="1" height="1" fill="#000"/>
<rect x="1024" y="656" width="1" height="1" fill="#000"/>
<rect x="1026" y="656" width="1" height="1" fill="#000"/>
<rect x="1028" y="656" width="1" height="1" fill="#000"/>
<rect x="1023" y="658" width="1" height="1" fill="#000"/>
<rect x="1025" y="658" width="1" height="1" fill="#000"/>
<rect x="1027" y="658" width="1" height="1" fill="#000"/>
<rect x="1022" y="660" width="1" height="1" fill="#000"/>
<rect x="1024" y="660" width="1" height="1" fill="#000"/>
<rect x="1026" y="660" width="1" height="1" fill="#000"/>
<rect x="1028" y="660" width="1" height="1" fill="#000"/>
<rect x="1023" y="662" width="1" height="1" fill="#000"/>
<rect x="1025" y="662" width="1" height="1" fill="#000"/>
<rect x="1027" y="662" width="1" height="1" fill="#000"/>
<rect x="1024" y="657" width="1" height="1" fill="#000"/>
<rect x="1026" y="659" width="1" height="1" fill="#000"/>
<rect x="1023" y="655" width="1" height="1" fill="#000"/>
<rect x="1027" y="661" width="1" height="1" fill="#000"/>
<path d="M1032.5,662 L1035,654" stroke="#000" stroke-width="1.3"/>
<rect x="1037" y="655" width="1" height="1" fill="#000"/>
<rect x="1039" y="654" width="1" height="1" fill="#000"/>
<rect x="1041" y="654" width="1" height="1" fill="#000"/>
<rect x="1037" y="658" width="1" height="1" fill="#000"/>
<rect x="1040" y="656" width="1" height="1" fill="#000"/>
<rect x="1042" y="656" width="1" height="1" fill="#000"/>
<rect x="1039" y="658" width="1" height="1" fill="#000"/>
<rect x="1041" y="658" width="1" height="1" fill="#000"/>
<rect x="1043" y="658" width="1" height="1" fill="#000"/>
<rect x="1040" y="660" width="1" height="1" fill="#000"/>
<rect x="1042" y="660" width="1" height="1" fill="#000"/>
<rect x="1038" y="661" width="1" height="1" fill="#000"/>
<rect x="1041" y="662" width="1" height="1" fill="#000"/>
<rect x="1043" y="662" width="1" height="1" fill="#000"/>
<rect x="1039" y="657" width="1" height="1" fill="#000"/>
<rect x="1042" y="657" width="1" height="1" fill="#000"/>
<rect x="1040" y="659" width="1" height="1" fill="#000"/>
<rect x="1043" y="660" width="1" height="1" fill="#000"/>
<path d="M1028,670 h-3 l-1,1 v4 l1,1 h3" fill="none" stroke="#000" stroke-width="2"/>
<path d="M1034.5,666.5 h5 l2,2 v7.5 h-7z" fill="#fff8d0" stroke="#000" stroke-width="1"/><rect x="1039" y="667.5" width="1.2" height="1.2" fill="#000"/>
</svg>
</body></html>
